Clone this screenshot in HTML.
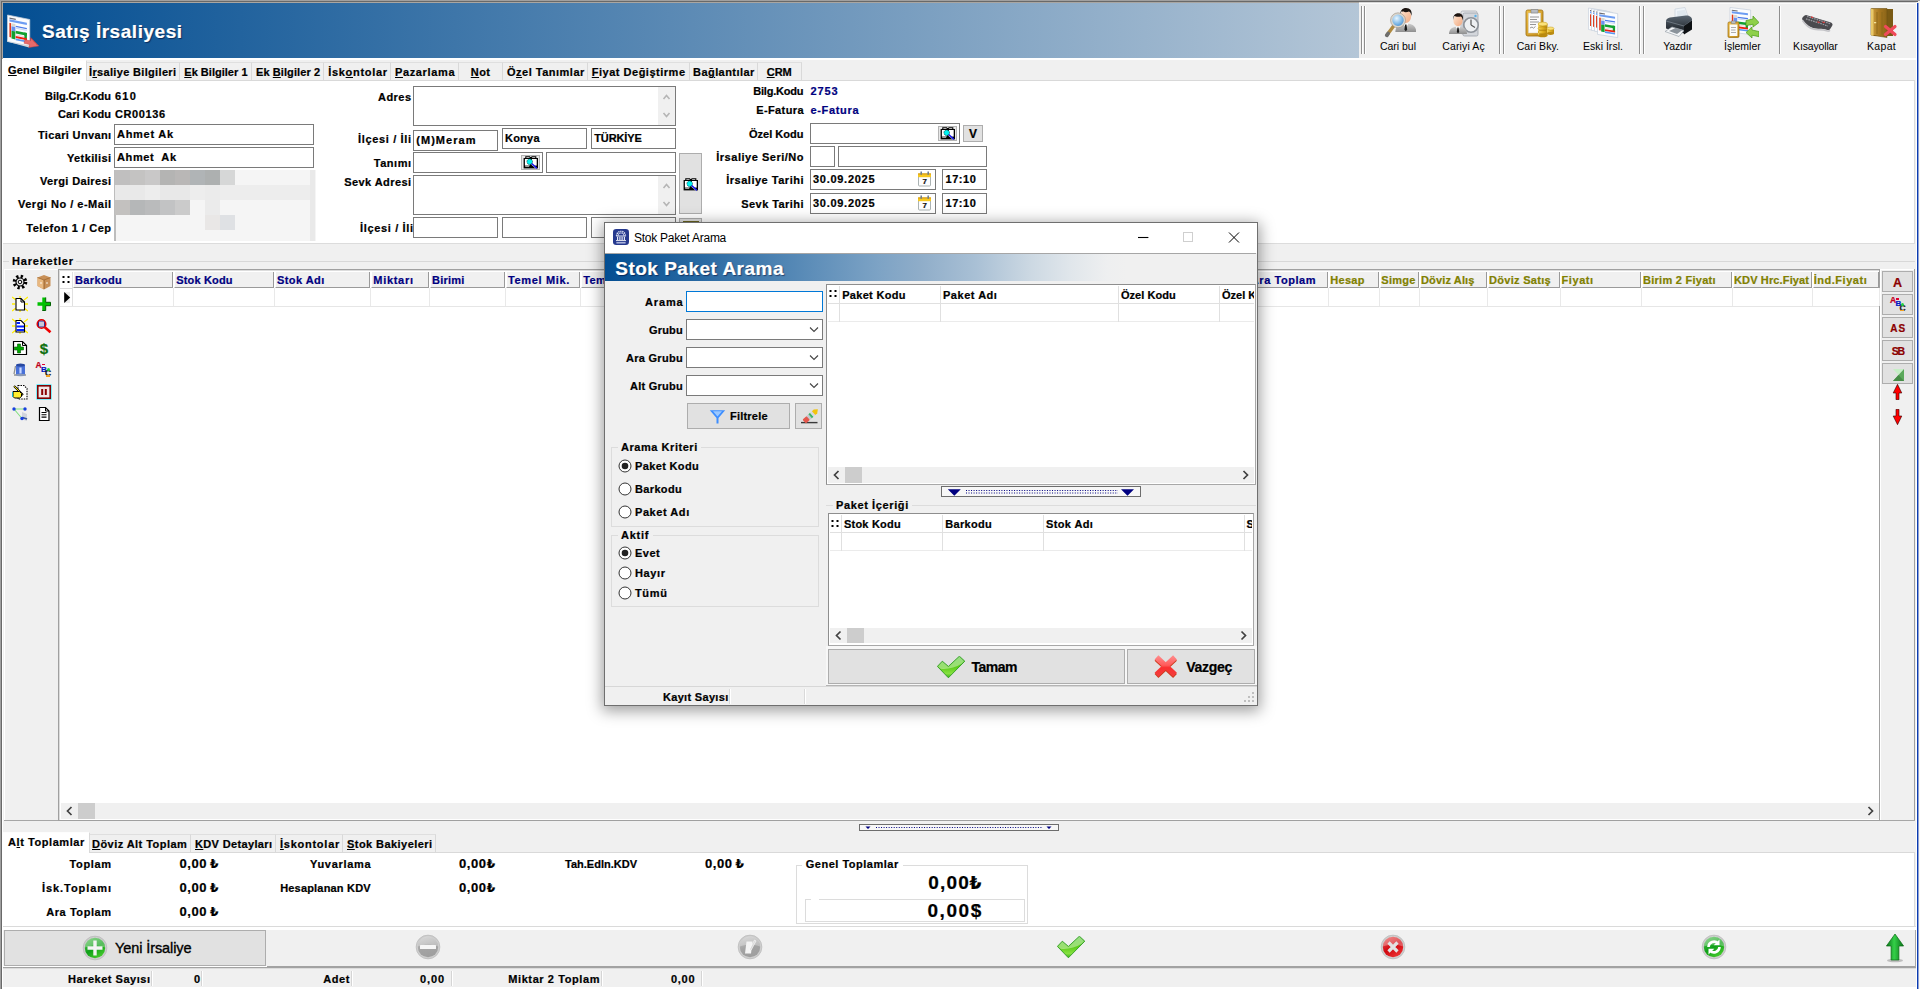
<!DOCTYPE html>
<html lang="tr"><head><meta charset="utf-8"><title>Satış İrsaliyesi</title>
<style>
html,body{margin:0;padding:0;}
body{width:1920px;height:989px;overflow:hidden;background:#f0f0f0;position:relative;font-family:"Liberation Sans",sans-serif;font-weight:700;}
div,svg,span.t{position:absolute;}
span.t{white-space:pre;-webkit-text-stroke:0.22px currentColor;}
u{text-decoration:underline;text-underline-offset:1px;text-decoration-thickness:1px;}
</style></head><body>
<div style="left:0px;top:0px;width:1920px;height:989px;background:#f0f0f0;"></div>
<div style="left:3px;top:3px;width:1356px;height:55px;background:linear-gradient(90deg,#034e92 0%,#b4c6d7 100%);"></div>
<div style="left:1359px;top:3px;width:557px;height:55px;background:#f0f0f0;"></div>
<div style="left:1359px;top:3px;width:557px;height:1px;background:#fbfbfb;"></div>
<div style="left:3px;top:58px;width:1913px;height:2px;background:#ffffff;"></div>
<span class="t" style="left:42.00px;top:18.00px;font-size:19px;line-height:27px;color:#fff;letter-spacing:0.532px;text-shadow:1px 1px 1px rgba(0,0,40,.55);">Satış İrsaliyesi</span>
<div style="left:1361px;top:6px;width:1px;height:48px;background:#8e8e8e;"></div>
<div style="left:1362px;top:6px;width:1px;height:48px;background:#ffffff;"></div>
<div style="left:1364px;top:6px;width:1px;height:48px;background:#8e8e8e;"></div>
<div style="left:1365px;top:6px;width:1px;height:48px;background:#ffffff;"></div>
<div style="left:1499px;top:6px;width:1px;height:48px;background:#8e8e8e;"></div>
<div style="left:1500px;top:6px;width:1px;height:48px;background:#ffffff;"></div>
<div style="left:1503px;top:6px;width:1px;height:48px;background:#8e8e8e;"></div>
<div style="left:1504px;top:6px;width:1px;height:48px;background:#ffffff;"></div>
<div style="left:1639px;top:6px;width:1px;height:48px;background:#8e8e8e;"></div>
<div style="left:1640px;top:6px;width:1px;height:48px;background:#ffffff;"></div>
<div style="left:1643px;top:6px;width:1px;height:48px;background:#8e8e8e;"></div>
<div style="left:1644px;top:6px;width:1px;height:48px;background:#ffffff;"></div>
<div style="left:1779px;top:6px;width:1px;height:48px;background:#8e8e8e;"></div>
<div style="left:1780px;top:6px;width:1px;height:48px;background:#ffffff;"></div>
<span class="t" style="left:1380.00px;top:39.00px;font-size:10.5px;line-height:15px;color:#000;font-weight:400;-webkit-text-stroke:0;letter-spacing:-0.026px;">Cari bul</span>
<span class="t" style="left:1442.35px;top:39.00px;font-size:10.5px;line-height:15px;color:#000;font-weight:400;-webkit-text-stroke:0;letter-spacing:0.109px;">Cariyi Aç</span>
<span class="t" style="left:1516.65px;top:39.00px;font-size:10.5px;line-height:15px;color:#000;font-weight:400;-webkit-text-stroke:0;letter-spacing:0.061px;">Cari Bky.</span>
<span class="t" style="left:1583.05px;top:39.00px;font-size:10.5px;line-height:15px;color:#000;font-weight:400;-webkit-text-stroke:0;letter-spacing:0.026px;">Eski İrsl.</span>
<span class="t" style="left:1663.25px;top:39.00px;font-size:10.5px;line-height:15px;color:#000;font-weight:400;-webkit-text-stroke:0;letter-spacing:-0.173px;">Yazdır</span>
<span class="t" style="left:1724.10px;top:39.00px;font-size:10.5px;line-height:15px;color:#000;font-weight:400;-webkit-text-stroke:0;letter-spacing:-0.022px;">İşlemler</span>
<span class="t" style="left:1793.05px;top:39.00px;font-size:10.5px;line-height:15px;color:#000;font-weight:400;-webkit-text-stroke:0;letter-spacing:-0.156px;">Kısayollar</span>
<span class="t" style="left:1867.05px;top:39.00px;font-size:10.5px;line-height:15px;color:#000;font-weight:400;-webkit-text-stroke:0;letter-spacing:0.316px;">Kapat</span>
<div style="left:3px;top:80px;width:1912px;height:1px;background:#d9d9d9;"></div>
<div style="left:3px;top:60px;width:84px;height:22px;background:#fff;border-right:1px solid #d9d9d9;border-top:1px solid #fdfdfd;box-sizing:border-box;"></div>
<span class="t" style="left:8.00px;top:63.00px;font-size:11px;line-height:15px;color:#000;letter-spacing:0.200px;"><u>G</u>enel Bilgiler</span>
<div style="left:87px;top:62px;width:93px;height:18px;background:#f0f0f0;border-top:1px solid #dfdfdf;border-right:1px solid #d9d9d9;box-sizing:border-box;"></div>
<span class="t" style="left:89.00px;top:65.00px;font-size:11px;line-height:15px;color:#000;letter-spacing:0.334px;">İ<u>r</u>saliye Bilgileri</span>
<div style="left:180px;top:62px;width:72px;height:18px;background:#f0f0f0;border-top:1px solid #dfdfdf;border-right:1px solid #d9d9d9;box-sizing:border-box;"></div>
<span class="t" style="left:184.25px;top:65.00px;font-size:11px;line-height:15px;color:#000;letter-spacing:0.023px;"><u>E</u>k Bilgiler 1</span>
<div style="left:252px;top:62px;width:72px;height:18px;background:#f0f0f0;border-top:1px solid #dfdfdf;border-right:1px solid #d9d9d9;box-sizing:border-box;"></div>
<span class="t" style="left:256.00px;top:65.00px;font-size:11px;line-height:15px;color:#000;letter-spacing:0.086px;">Ek <u>B</u>ilgiler 2</span>
<div style="left:324px;top:62px;width:67px;height:18px;background:#f0f0f0;border-top:1px solid #dfdfdf;border-right:1px solid #d9d9d9;box-sizing:border-box;"></div>
<span class="t" style="left:328.25px;top:65.00px;font-size:11px;line-height:15px;color:#000;letter-spacing:0.687px;">İsk<u>o</u>ntolar</span>
<div style="left:391px;top:62px;width:68px;height:18px;background:#f0f0f0;border-top:1px solid #dfdfdf;border-right:1px solid #d9d9d9;box-sizing:border-box;"></div>
<span class="t" style="left:395.00px;top:65.00px;font-size:11px;line-height:15px;color:#000;letter-spacing:0.634px;"><u>P</u>azarlama</span>
<div style="left:459px;top:62px;width:44px;height:18px;background:#f0f0f0;border-top:1px solid #dfdfdf;border-right:1px solid #d9d9d9;box-sizing:border-box;"></div>
<span class="t" style="left:470.75px;top:65.00px;font-size:11px;line-height:15px;color:#000;letter-spacing:0.462px;"><u>N</u>ot</span>
<div style="left:503px;top:62px;width:85px;height:18px;background:#f0f0f0;border-top:1px solid #dfdfdf;border-right:1px solid #d9d9d9;box-sizing:border-box;"></div>
<span class="t" style="left:507.00px;top:65.00px;font-size:11px;line-height:15px;color:#000;letter-spacing:0.495px;">Ö<u>z</u>el Tanımlar</span>
<div style="left:588px;top:62px;width:102px;height:18px;background:#f0f0f0;border-top:1px solid #dfdfdf;border-right:1px solid #d9d9d9;box-sizing:border-box;"></div>
<span class="t" style="left:591.75px;top:65.00px;font-size:11px;line-height:15px;color:#000;letter-spacing:0.511px;"><u>F</u>iyat Değiştirme</span>
<div style="left:690px;top:62px;width:68px;height:18px;background:#f0f0f0;border-top:1px solid #dfdfdf;border-right:1px solid #d9d9d9;box-sizing:border-box;"></div>
<span class="t" style="left:693.00px;top:65.00px;font-size:11px;line-height:15px;color:#000;letter-spacing:0.441px;">Ba<u>ğ</u>lantılar</span>
<div style="left:758px;top:62px;width:44px;height:18px;background:#f0f0f0;border-top:1px solid #dfdfdf;border-right:1px solid #d9d9d9;box-sizing:border-box;"></div>
<span class="t" style="left:766.75px;top:65.00px;font-size:11px;line-height:15px;color:#000;letter-spacing:-0.025px;"><u>C</u>RM</span>
<div style="left:3px;top:81px;width:1912px;height:163px;background:#fff;border-bottom:1px solid #dcdcdc;border-right:1px solid #dcdcdc;box-sizing:border-box;"></div>
<span class="t" style="left:45.00px;top:89.00px;font-size:11px;line-height:15px;color:#000;letter-spacing:-0.055px;">Bilg.Cr.Kodu</span>
<span class="t" style="left:115.00px;top:89.00px;font-size:11px;line-height:15px;color:#000;letter-spacing:1.199px;">610</span>
<span class="t" style="left:58.00px;top:107.00px;font-size:11px;line-height:15px;color:#000;letter-spacing:0.056px;">Cari Kodu</span>
<span class="t" style="left:115.00px;top:107.00px;font-size:11px;line-height:15px;color:#000;letter-spacing:0.588px;">CR00136</span>
<span class="t" style="left:38.00px;top:128.00px;font-size:11px;line-height:15px;color:#000;letter-spacing:0.344px;">Ticari Unvanı</span>
<div style="left:114px;top:124px;width:200px;height:21px;background:#fff;border:1px solid #7a7a7a;box-sizing:border-box;"></div>
<span class="t" style="left:117.00px;top:127.00px;font-size:11px;line-height:15px;color:#000;letter-spacing:0.724px;">Ahmet Ak</span>
<span class="t" style="left:67.00px;top:151.00px;font-size:11px;line-height:15px;color:#000;letter-spacing:0.379px;">Yetkilisi</span>
<div style="left:114px;top:147px;width:200px;height:21px;background:#fff;border:1px solid #7a7a7a;box-sizing:border-box;"></div>
<span class="t" style="left:117.00px;top:150.00px;font-size:11px;line-height:15px;color:#000;letter-spacing:0.626px;">Ahmet  Ak</span>
<span class="t" style="left:40.00px;top:174.00px;font-size:11px;line-height:15px;color:#000;letter-spacing:0.363px;">Vergi Dairesi</span>
<span class="t" style="left:18.00px;top:197.00px;font-size:11px;line-height:15px;color:#000;letter-spacing:0.502px;">Vergi No / e-Mail</span>
<span class="t" style="left:26.25px;top:221.00px;font-size:11px;line-height:15px;color:#000;letter-spacing:0.524px;">Telefon 1 / Cep</span>
<div style="left:114px;top:170px;width:202px;height:71px;background:#f5f5f5;"></div>
<div style="left:114px;top:170px;width:2px;height:71px;background:#bdbdbd;"></div>
<div style="left:115px;top:170px;width:15px;height:15px;background:#c0bfbf;"></div>
<div style="left:130px;top:170px;width:15px;height:15px;background:#c4c3c2;"></div>
<div style="left:145px;top:170px;width:15px;height:15px;background:#c9c8c8;"></div>
<div style="left:160px;top:170px;width:15px;height:15px;background:#b4b4b3;"></div>
<div style="left:175px;top:170px;width:15px;height:15px;background:#b9b7b6;"></div>
<div style="left:190px;top:170px;width:15px;height:15px;background:#b0b4b6;"></div>
<div style="left:205px;top:170px;width:15px;height:15px;background:#adb0b0;"></div>
<div style="left:220px;top:170px;width:15px;height:15px;background:#d6d7d7;"></div>
<div style="left:115px;top:185px;width:200px;height:15px;background:#ededed;"></div>
<div style="left:115px;top:185px;width:30px;height:15px;background:#e9e9e9;"></div>
<div style="left:160px;top:185px;width:30px;height:15px;background:#e8e8e8;"></div>
<div style="left:115px;top:200px;width:15px;height:15px;background:#c3c1bf;"></div>
<div style="left:130px;top:200px;width:15px;height:15px;background:#b5b7b8;"></div>
<div style="left:145px;top:200px;width:15px;height:15px;background:#babbbc;"></div>
<div style="left:160px;top:200px;width:15px;height:15px;background:#c2c3c4;"></div>
<div style="left:175px;top:200px;width:15px;height:15px;background:#cbcbcb;"></div>
<div style="left:205px;top:185px;width:15px;height:45px;background:#ebebeb;"></div>
<div style="left:205px;top:215px;width:15px;height:15px;background:#e9e7e6;"></div>
<div style="left:220px;top:215px;width:15px;height:15px;background:#dfe1e4;"></div>
<div style="left:310px;top:170px;width:5px;height:71px;background:#e9e9e9;"></div>
<span class="t" style="left:378.00px;top:90.00px;font-size:11px;line-height:15px;color:#000;letter-spacing:0.455px;">Adres</span>
<span class="t" style="left:358.00px;top:132.00px;font-size:11px;line-height:15px;color:#000;letter-spacing:0.650px;">İlçesi / İli</span>
<span class="t" style="left:373.75px;top:156.00px;font-size:11px;line-height:15px;color:#000;letter-spacing:0.524px;">Tanımı</span>
<span class="t" style="left:344.25px;top:175.00px;font-size:11px;line-height:15px;color:#000;letter-spacing:0.418px;">Sevk Adresi</span>
<span class="t" style="left:360.00px;top:221.00px;font-size:11px;line-height:15px;color:#000;letter-spacing:0.650px;">İlçesi / İli</span>
<div style="left:413px;top:86px;width:263px;height:40px;background:#fff;border:1px solid #7a7a7a;box-sizing:border-box;"></div>
<div style="left:658px;top:87px;width:17px;height:38px;background:#f0f0f0;"></div>
<svg style="left:658px;top:87px;" width="17" height="38" viewBox="0 0 17 38"><path d="M5.5 12l3-3.5l3 3.5" fill="none" stroke="#b5b5b5" stroke-width="1.6"/><path d="M5.5 26l3 3.5l3-3.5" fill="none" stroke="#b5b5b5" stroke-width="1.6"/></svg>
<div style="left:413px;top:130px;width:85px;height:21px;background:#fff;border:1px solid #7a7a7a;box-sizing:border-box;"></div>
<span class="t" style="left:416.25px;top:133.00px;font-size:11px;line-height:15px;color:#000;letter-spacing:1.043px;">(M)Meram</span>
<div style="left:502px;top:128px;width:85px;height:21px;background:#fff;border:1px solid #7a7a7a;box-sizing:border-box;"></div>
<span class="t" style="left:505.00px;top:131.00px;font-size:11px;line-height:15px;color:#000;letter-spacing:0.221px;">Konya</span>
<div style="left:591px;top:128px;width:85px;height:21px;background:#fff;border:1px solid #7a7a7a;box-sizing:border-box;"></div>
<span class="t" style="left:594.25px;top:131.00px;font-size:11px;line-height:15px;color:#000;letter-spacing:-0.130px;">TÜRKİYE</span>
<div style="left:413px;top:152px;width:130px;height:21px;background:#fff;border:1px solid #7a7a7a;box-sizing:border-box;"></div>
<div style="left:546px;top:152px;width:130px;height:21px;background:#fff;border:1px solid #7a7a7a;box-sizing:border-box;"></div>
<div style="left:413px;top:175px;width:263px;height:40px;background:#fff;border:1px solid #7a7a7a;box-sizing:border-box;"></div>
<div style="left:658px;top:176px;width:17px;height:38px;background:#f0f0f0;"></div>
<svg style="left:658px;top:176px;" width="17" height="38" viewBox="0 0 17 38"><path d="M5.5 12l3-3.5l3 3.5" fill="none" stroke="#b5b5b5" stroke-width="1.6"/><path d="M5.5 26l3 3.5l3-3.5" fill="none" stroke="#b5b5b5" stroke-width="1.6"/></svg>
<div style="left:413px;top:217px;width:85px;height:21px;background:#fff;border:1px solid #7a7a7a;box-sizing:border-box;"></div>
<div style="left:502px;top:217px;width:85px;height:21px;background:#fff;border:1px solid #7a7a7a;box-sizing:border-box;"></div>
<div style="left:591px;top:217px;width:85px;height:21px;background:#fff;border:1px solid #7a7a7a;box-sizing:border-box;"></div>
<div style="left:679px;top:153px;width:23px;height:61px;background:#e1e1e1;border:1px solid #adadad;box-sizing:border-box;"></div>
<div style="left:679px;top:218px;width:23px;height:24px;background:#e1e1e1;border:1px solid #adadad;box-sizing:border-box;"></div>
<div style="left:683px;top:221px;width:16px;height:1px;background:#6a6420;"></div>
<span class="t" style="left:753.25px;top:84.00px;font-size:11px;line-height:15px;color:#000;letter-spacing:-0.210px;">Bilg.Kodu</span>
<span class="t" style="left:810.50px;top:84.00px;font-size:11px;line-height:15px;color:#000080;letter-spacing:0.844px;">2753</span>
<span class="t" style="left:756.25px;top:103.00px;font-size:11px;line-height:15px;color:#000;letter-spacing:0.376px;">E-Fatura</span>
<span class="t" style="left:810.50px;top:103.00px;font-size:11px;line-height:15px;color:#000080;letter-spacing:0.658px;">e-Fatura</span>
<span class="t" style="left:749.00px;top:127.00px;font-size:11px;line-height:15px;color:#000;letter-spacing:0.014px;">Özel Kodu</span>
<div style="left:810px;top:123px;width:150px;height:21px;background:#fff;border:1px solid #7a7a7a;box-sizing:border-box;"></div>
<div style="left:963px;top:125px;width:20px;height:17px;background:#e1e1e1;border:1px solid #adadad;box-sizing:border-box;"></div>
<span class="t" style="left:969.00px;top:126.00px;font-size:12px;line-height:17px;color:#000;">V</span>
<span class="t" style="left:716.25px;top:150.00px;font-size:11px;line-height:15px;color:#000;letter-spacing:0.518px;">İrsaliye Seri/No</span>
<div style="left:810px;top:146px;width:25px;height:21px;background:#fff;border:1px solid #7a7a7a;box-sizing:border-box;"></div>
<div style="left:838px;top:146px;width:149px;height:21px;background:#fff;border:1px solid #7a7a7a;box-sizing:border-box;"></div>
<span class="t" style="left:726.25px;top:173.00px;font-size:11px;line-height:15px;color:#000;letter-spacing:0.510px;">İrsaliye Tarihi</span>
<div style="left:810px;top:169px;width:126px;height:21px;background:#fff;border:1px solid #7a7a7a;box-sizing:border-box;"></div>
<div style="left:942px;top:169px;width:45px;height:21px;background:#fff;border:1px solid #7a7a7a;box-sizing:border-box;"></div>
<span class="t" style="left:813.00px;top:172.00px;font-size:11px;line-height:15px;color:#000;letter-spacing:0.717px;">30.09.2025</span>
<span class="t" style="left:945.50px;top:172.00px;font-size:11px;line-height:15px;color:#000;letter-spacing:0.530px;">17:10</span>
<span class="t" style="left:741.25px;top:197.00px;font-size:11px;line-height:15px;color:#000;letter-spacing:0.437px;">Sevk Tarihi</span>
<div style="left:810px;top:193px;width:126px;height:21px;background:#fff;border:1px solid #7a7a7a;box-sizing:border-box;"></div>
<div style="left:942px;top:193px;width:45px;height:21px;background:#fff;border:1px solid #7a7a7a;box-sizing:border-box;"></div>
<span class="t" style="left:813.00px;top:196.00px;font-size:11px;line-height:15px;color:#000;letter-spacing:0.717px;">30.09.2025</span>
<span class="t" style="left:945.50px;top:196.00px;font-size:11px;line-height:15px;color:#000;letter-spacing:0.530px;">17:10</span>
<div style="left:3px;top:261px;width:1912px;height:1px;background:#d8d8d8;"></div>
<div style="left:4px;top:269px;width:1px;height:551px;background:#fff;"></div>
<div style="left:4px;top:269px;width:54px;height:1px;background:#fff;"></div>
<div style="left:1914px;top:269px;width:1px;height:552px;background:#a0a0a0;"></div>
<div style="left:1880px;top:269px;width:34px;height:1px;background:#fff;"></div>
<div style="left:1880px;top:269px;width:1px;height:551px;background:#fff;"></div>
<div style="left:9px;top:255px;width:67px;height:14px;background:#f0f0f0;"></div>
<span class="t" style="left:12.00px;top:254.00px;font-size:11px;line-height:15px;color:#000;letter-spacing:0.799px;">Hareketler</span>
<div style="left:4px;top:820px;width:1911px;height:1px;background:#a6a6a6;"></div>
<div style="left:58px;top:269px;width:1822px;height:552px;background:#fff;border:1px solid #a0a0a0;box-sizing:border-box;box-shadow:inset 1px 1px 0 #dcdcdc;"></div>
<div style="left:60px;top:272px;width:1819px;height:16px;background:#fff;"></div>
<div style="left:60px;top:272px;width:11px;height:16px;background:#fff;"></div>
<div style="left:73px;top:272px;width:100px;height:16px;background:#f0f0f0;border-right:1px solid #9a9a9a;border-bottom:1px solid #9a9a9a;border-left:1px solid #fff;box-sizing:border-box;"></div>
<span class="t" style="left:75.00px;top:273.00px;font-size:11px;line-height:15px;color:#000080;letter-spacing:0.356px;">Barkodu</span>
<div style="left:173px;top:288px;width:1px;height:18px;background:#e9e9e9;"></div>
<div style="left:174px;top:272px;width:100px;height:16px;background:#f0f0f0;border-right:1px solid #9a9a9a;border-bottom:1px solid #9a9a9a;border-left:1px solid #fff;box-sizing:border-box;"></div>
<span class="t" style="left:176.25px;top:273.00px;font-size:11px;line-height:15px;color:#000080;letter-spacing:0.157px;">Stok Kodu</span>
<div style="left:274px;top:288px;width:1px;height:18px;background:#e9e9e9;"></div>
<div style="left:275px;top:272px;width:95px;height:16px;background:#f0f0f0;border-right:1px solid #9a9a9a;border-bottom:1px solid #9a9a9a;border-left:1px solid #fff;box-sizing:border-box;"></div>
<span class="t" style="left:277.00px;top:273.00px;font-size:11px;line-height:15px;color:#000080;letter-spacing:0.435px;">Stok Adı</span>
<div style="left:370px;top:288px;width:1px;height:18px;background:#e9e9e9;"></div>
<div style="left:371px;top:272px;width:58px;height:16px;background:#f0f0f0;border-right:1px solid #9a9a9a;border-bottom:1px solid #9a9a9a;border-left:1px solid #fff;box-sizing:border-box;"></div>
<span class="t" style="left:373.25px;top:273.00px;font-size:11px;line-height:15px;color:#000080;letter-spacing:0.716px;">Miktarı</span>
<div style="left:429px;top:288px;width:1px;height:18px;background:#e9e9e9;"></div>
<div style="left:430px;top:272px;width:75px;height:16px;background:#f0f0f0;border-right:1px solid #9a9a9a;border-bottom:1px solid #9a9a9a;border-left:1px solid #fff;box-sizing:border-box;"></div>
<span class="t" style="left:432.00px;top:273.00px;font-size:11px;line-height:15px;color:#000080;letter-spacing:0.215px;">Birimi</span>
<div style="left:505px;top:288px;width:1px;height:18px;background:#e9e9e9;"></div>
<div style="left:506px;top:272px;width:74px;height:16px;background:#f0f0f0;border-right:1px solid #9a9a9a;border-bottom:1px solid #9a9a9a;border-left:1px solid #fff;box-sizing:border-box;"></div>
<span class="t" style="left:508.00px;top:273.00px;font-size:11px;line-height:15px;color:#000080;letter-spacing:0.648px;">Temel Mik.</span>
<div style="left:580px;top:288px;width:1px;height:18px;background:#e9e9e9;"></div>
<div style="left:581px;top:272px;width:120px;height:16px;background:#f0f0f0;border-right:1px solid #9a9a9a;border-bottom:1px solid #9a9a9a;border-left:1px solid #fff;box-sizing:border-box;"></div>
<span class="t" style="left:583.25px;top:273.00px;font-size:11px;line-height:15px;color:#000080;letter-spacing:0.385px;">Temel Birim</span>
<div style="left:701px;top:288px;width:1px;height:18px;background:#e9e9e9;"></div>
<div style="left:1240px;top:272px;width:88px;height:16px;background:#f0f0f0;border-right:1px solid #9a9a9a;border-bottom:1px solid #9a9a9a;border-left:1px solid #fff;box-sizing:border-box;"></div>
<span class="t" style="left:1250.80px;top:273.00px;font-size:11px;line-height:15px;color:#000080;letter-spacing:0.562px;">Ara Toplam</span>
<div style="left:1328px;top:288px;width:1px;height:18px;background:#e9e9e9;"></div>
<div style="left:1329px;top:272px;width:50px;height:16px;background:#f0f0f0;border-right:1px solid #9a9a9a;border-bottom:1px solid #9a9a9a;border-left:1px solid #fff;box-sizing:border-box;"></div>
<span class="t" style="left:1330.25px;top:273.00px;font-size:11px;line-height:15px;color:#808000;letter-spacing:0.297px;">Hesap</span>
<div style="left:1379px;top:288px;width:1px;height:18px;background:#e9e9e9;"></div>
<div style="left:1380px;top:272px;width:39px;height:16px;background:#f0f0f0;border-right:1px solid #9a9a9a;border-bottom:1px solid #9a9a9a;border-left:1px solid #fff;box-sizing:border-box;"></div>
<span class="t" style="left:1381.25px;top:273.00px;font-size:11px;line-height:15px;color:#808000;letter-spacing:0.297px;">Simge</span>
<div style="left:1419px;top:288px;width:1px;height:18px;background:#e9e9e9;"></div>
<div style="left:1420px;top:272px;width:67px;height:16px;background:#f0f0f0;border-right:1px solid #9a9a9a;border-bottom:1px solid #9a9a9a;border-left:1px solid #fff;box-sizing:border-box;"></div>
<span class="t" style="left:1421.00px;top:273.00px;font-size:11px;line-height:15px;color:#808000;letter-spacing:0.138px;">Döviz Alış</span>
<div style="left:1487px;top:288px;width:1px;height:18px;background:#e9e9e9;"></div>
<div style="left:1488px;top:272px;width:72px;height:16px;background:#f0f0f0;border-right:1px solid #9a9a9a;border-bottom:1px solid #9a9a9a;border-left:1px solid #fff;box-sizing:border-box;"></div>
<span class="t" style="left:1489.00px;top:273.00px;font-size:11px;line-height:15px;color:#808000;letter-spacing:0.292px;">Döviz Satış</span>
<div style="left:1560px;top:288px;width:1px;height:18px;background:#e9e9e9;"></div>
<div style="left:1561px;top:272px;width:80px;height:16px;background:#f0f0f0;border-right:1px solid #9a9a9a;border-bottom:1px solid #9a9a9a;border-left:1px solid #fff;box-sizing:border-box;"></div>
<span class="t" style="left:1561.60px;top:273.00px;font-size:11px;line-height:15px;color:#808000;letter-spacing:0.555px;">Fiyatı</span>
<div style="left:1641px;top:288px;width:1px;height:18px;background:#e9e9e9;"></div>
<div style="left:1642px;top:272px;width:90px;height:16px;background:#f0f0f0;border-right:1px solid #9a9a9a;border-bottom:1px solid #9a9a9a;border-left:1px solid #fff;box-sizing:border-box;"></div>
<span class="t" style="left:1643.00px;top:273.00px;font-size:11px;line-height:15px;color:#808000;letter-spacing:0.271px;">Birim 2 Fiyatı</span>
<div style="left:1732px;top:288px;width:1px;height:18px;background:#e9e9e9;"></div>
<div style="left:1733px;top:272px;width:79px;height:16px;background:#f0f0f0;border-right:1px solid #9a9a9a;border-bottom:1px solid #9a9a9a;border-left:1px solid #fff;box-sizing:border-box;"></div>
<span class="t" style="left:1734.00px;top:273.00px;font-size:11px;line-height:15px;color:#808000;letter-spacing:0.137px;">KDV Hrc.Fiyat</span>
<div style="left:1812px;top:288px;width:1px;height:18px;background:#e9e9e9;"></div>
<div style="left:1813px;top:272px;width:66px;height:16px;background:#f0f0f0;border-right:1px solid #9a9a9a;border-bottom:1px solid #9a9a9a;border-left:1px solid #fff;box-sizing:border-box;"></div>
<span class="t" style="left:1813.70px;top:273.00px;font-size:11px;line-height:15px;color:#808000;letter-spacing:0.525px;">İnd.Fiyatı</span>
<div style="left:1879px;top:288px;width:1px;height:18px;background:#e9e9e9;"></div>
<div style="left:60px;top:306px;width:1819px;height:1px;background:#e6e6e6;"></div>
<div style="left:60px;top:288px;width:12px;height:1px;background:#dcdcdc;"></div>
<div style="left:72px;top:272px;width:1px;height:34px;background:#e0e0e0;"></div>
<svg style="left:62px;top:275px;" width="8" height="10" viewBox="0 0 8 10"><rect x="0.5" y="1" width="2" height="2"/><rect x="5.5" y="1" width="2" height="2"/><rect x="0.5" y="6" width="2" height="2"/><rect x="5.5" y="6" width="2" height="2"/></svg>
<div style="left:64px;top:292px;width:6px;height:11px;background:#ececec;"></div>
<svg style="left:63px;top:291px;" width="9" height="13" viewBox="0 0 9 13"><path d="M1.2 1v11l6-5.5z" fill="#000"/></svg>
<div style="left:61px;top:803px;width:1818px;height:16px;background:#f0f0f0;"></div>
<svg style="left:61px;top:803px;" width="17" height="16" viewBox="0 0 17 16"><path d="M10.5 4.0l-4 4l4 4" fill="none" stroke="#404040" stroke-width="1.7"/></svg>
<svg style="left:1862px;top:803px;" width="17" height="16" viewBox="0 0 17 16"><path d="M6.5 4.0l4 4l-4 4" fill="none" stroke="#404040" stroke-width="1.7"/></svg>
<div style="left:78px;top:803px;width:17px;height:16px;background:#cdcdcd;"></div>
<div style="left:1882px;top:271px;width:31px;height:21px;background:#e1e1e1;border:1px solid #adadad;box-sizing:border-box;"></div>
<div style="left:1882px;top:294px;width:31px;height:21px;background:#e1e1e1;border:1px solid #adadad;box-sizing:border-box;"></div>
<div style="left:1882px;top:317px;width:31px;height:21px;background:#e1e1e1;border:1px solid #adadad;box-sizing:border-box;"></div>
<div style="left:1882px;top:340px;width:31px;height:21px;background:#e1e1e1;border:1px solid #adadad;box-sizing:border-box;"></div>
<div style="left:1882px;top:363px;width:31px;height:21px;background:#e1e1e1;border:1px solid #adadad;box-sizing:border-box;"></div>
<span class="t" style="left:1892.90px;top:274.00px;font-size:12.5px;line-height:18px;color:#8b0000;letter-spacing:0.173px;">A</span>
<span class="t" style="left:1890.25px;top:322.00px;font-size:10px;line-height:14px;color:#8b0000;letter-spacing:1.008px;">AS</span>
<span class="t" style="left:1891.80px;top:344.00px;font-size:10.5px;line-height:15px;color:#8b0000;letter-spacing:-1.187px;">SB</span>
<div style="left:859px;top:824px;width:200px;height:7px;background:#f7f7f7;border:1px solid #6d6d6d;box-sizing:border-box;"></div>
<svg style="left:859px;top:824px;" width="200" height="7" viewBox="0 0 200 7"><path d="M6.500 2.500h5l-2.500 2.600z M187.500 2.500h5l-2.500 2.600z" fill="#000080"/><path d="M17 3.500h167" stroke="#000080" stroke-width="1" stroke-dasharray="1 1.530"/></svg>
<div style="left:3px;top:852px;width:1912px;height:1px;background:#d9d9d9;"></div>
<div style="left:3px;top:832px;width:87px;height:22px;background:#fff;border-right:1px solid #d9d9d9;border-top:1px solid #fdfdfd;box-sizing:border-box;"></div>
<span class="t" style="left:8.00px;top:835.00px;font-size:11px;line-height:15px;color:#000;letter-spacing:0.565px;">A<u>l</u>t Toplamlar</span>
<div style="left:90px;top:834px;width:101px;height:18px;background:#f0f0f0;border-top:1px solid #dfdfdf;border-right:1px solid #d9d9d9;box-sizing:border-box;"></div>
<span class="t" style="left:92.00px;top:837.00px;font-size:11px;line-height:15px;color:#000;letter-spacing:0.450px;"><u>D</u>öviz Alt Toplam</span>
<div style="left:191px;top:834px;width:85px;height:18px;background:#f0f0f0;border-top:1px solid #dfdfdf;border-right:1px solid #d9d9d9;box-sizing:border-box;"></div>
<span class="t" style="left:195.00px;top:837.00px;font-size:11px;line-height:15px;color:#000;letter-spacing:0.354px;"><u>K</u>DV Detayları</span>
<div style="left:276px;top:834px;width:67px;height:18px;background:#f0f0f0;border-top:1px solid #dfdfdf;border-right:1px solid #d9d9d9;box-sizing:border-box;"></div>
<span class="t" style="left:280.00px;top:837.00px;font-size:11px;line-height:15px;color:#000;letter-spacing:0.743px;"><u>İ</u>skontolar</span>
<div style="left:343px;top:834px;width:93px;height:18px;background:#f0f0f0;border-top:1px solid #dfdfdf;border-right:1px solid #d9d9d9;box-sizing:border-box;"></div>
<span class="t" style="left:347.00px;top:837.00px;font-size:11px;line-height:15px;color:#000;letter-spacing:0.438px;"><u>S</u>tok Bakiyeleri</span>
<div style="left:3px;top:853px;width:1912px;height:73px;background:#fff;border-right:1px solid #dcdcdc;box-sizing:border-box;"></div>
<span class="t" style="left:69.50px;top:857.00px;font-size:11px;line-height:15px;color:#000;letter-spacing:0.641px;">Toplam</span>
<span class="t" style="left:179.40px;top:855.00px;font-size:13px;line-height:18px;color:#000;letter-spacing:0.600px;">0,00</span>
<span class="t" style="left:209.90px;top:856px;font-size:12px;line-height:17px;font-family:'DejaVu Sans',sans-serif;">₺</span>
<span class="t" style="left:42.00px;top:881.00px;font-size:11px;line-height:15px;color:#000;letter-spacing:0.930px;">İsk.Toplamı</span>
<span class="t" style="left:179.40px;top:879.00px;font-size:13px;line-height:18px;color:#000;letter-spacing:0.600px;">0,00</span>
<span class="t" style="left:209.90px;top:880px;font-size:12px;line-height:17px;font-family:'DejaVu Sans',sans-serif;">₺</span>
<span class="t" style="left:46.25px;top:905.00px;font-size:11px;line-height:15px;color:#000;letter-spacing:0.562px;">Ara Toplam</span>
<span class="t" style="left:179.40px;top:903.00px;font-size:13px;line-height:18px;color:#000;letter-spacing:0.600px;">0,00</span>
<span class="t" style="left:209.90px;top:904px;font-size:12px;line-height:17px;font-family:'DejaVu Sans',sans-serif;">₺</span>
<span class="t" style="left:310.00px;top:857.00px;font-size:11px;line-height:15px;color:#000;letter-spacing:0.695px;">Yuvarlama</span>
<span class="t" style="left:459.00px;top:855.00px;font-size:13px;line-height:18px;color:#000;letter-spacing:0.600px;">0,00</span>
<span class="t" style="left:486.70px;top:856px;font-size:12px;line-height:17px;font-family:'DejaVu Sans',sans-serif;">₺</span>
<span class="t" style="left:280.20px;top:881.00px;font-size:11px;line-height:15px;color:#000;letter-spacing:0.183px;">Hesaplanan KDV</span>
<span class="t" style="left:459.00px;top:879.00px;font-size:13px;line-height:18px;color:#000;letter-spacing:0.600px;">0,00</span>
<span class="t" style="left:486.70px;top:880px;font-size:12px;line-height:17px;font-family:'DejaVu Sans',sans-serif;">₺</span>
<span class="t" style="left:565.00px;top:857.00px;font-size:11px;line-height:15px;color:#000;letter-spacing:0.009px;">Tah.Edln.KDV</span>
<span class="t" style="left:705.00px;top:855.00px;font-size:13px;line-height:18px;color:#000;letter-spacing:0.600px;">0,00</span>
<span class="t" style="left:735.50px;top:856px;font-size:12px;line-height:17px;font-family:'DejaVu Sans',sans-serif;">₺</span>
<div style="left:796px;top:865px;width:232px;height:59px;border:1px solid #dcdcdc;box-sizing:border-box;"></div>
<div style="left:802px;top:858px;width:101px;height:14px;background:#fff;"></div>
<span class="t" style="left:805.75px;top:857.00px;font-size:11px;line-height:15px;color:#000;letter-spacing:0.509px;">Genel Toplamlar</span>
<div style="left:805px;top:899px;width:220px;height:23px;border:1px solid #dcdcdc;box-sizing:border-box;"></div>
<div style="left:811px;top:899px;width:8px;height:1px;background:#fff;"></div>
<span class="t" style="left:928.25px;top:869.00px;font-size:19px;line-height:27px;color:#000;letter-spacing:1.175px;">0,00</span>
<span class="t" style="left:969.50px;top:871px;font-size:17px;line-height:24px;font-family:'DejaVu Sans',sans-serif;">₺</span>
<span class="t" style="left:927.50px;top:897.00px;font-size:19px;line-height:27px;color:#000;letter-spacing:1.552px;">0,00$</span>
<div style="left:3px;top:926px;width:1913px;height:1px;background:#dadada;"></div>
<div style="left:3px;top:927px;width:1913px;height:3px;background:#fff;"></div>
<div style="left:3px;top:930px;width:1913px;height:36px;background:#f0f0f0;"></div>
<div style="left:3px;top:966px;width:1913px;height:2px;background:#a2a2a2;"></div>
<div style="left:3px;top:966px;width:264px;height:1px;background:#fff;"></div>
<div style="left:3px;top:968px;width:1913px;height:1px;background:#dcdcdc;"></div>
<div style="left:1915px;top:930px;width:1px;height:37px;background:#a8a8a8;"></div>
<div style="left:4px;top:930px;width:262px;height:36px;background:#e1e1e1;border:1px solid #adadad;box-sizing:border-box;"></div>
<span class="t" style="left:115.00px;top:938.00px;font-size:14.5px;line-height:20px;color:#000;font-weight:400;-webkit-text-stroke:0;letter-spacing:-0.095px;-webkit-text-stroke:0.35px #000;">Yeni İrsaliye</span>
<div style="left:3px;top:969px;width:1913px;height:18px;background:#f0f0f0;"></div>
<div style="left:0px;top:987px;width:1920px;height:2px;background:#fff;"></div>
<span class="t" style="left:68.00px;top:972.00px;font-size:11px;line-height:15px;color:#000;letter-spacing:0.522px;">Hareket Sayısı</span>
<div style="left:151px;top:971px;width:1px;height:15px;background:#d5d5d5;"></div>
<div style="left:152px;top:971px;width:1px;height:15px;background:#fff;"></div>
<span class="t" style="left:193.88px;top:972.00px;font-size:11px;line-height:15px;color:#000;">0</span>
<div style="left:201px;top:971px;width:1px;height:15px;background:#d5d5d5;"></div>
<div style="left:202px;top:971px;width:1px;height:15px;background:#fff;"></div>
<span class="t" style="left:323.25px;top:972.00px;font-size:11px;line-height:15px;color:#000;letter-spacing:0.603px;">Adet</span>
<div style="left:351px;top:971px;width:1px;height:15px;background:#d5d5d5;"></div>
<div style="left:352px;top:971px;width:1px;height:15px;background:#fff;"></div>
<span class="t" style="left:420.00px;top:972.00px;font-size:11px;line-height:15px;color:#000;letter-spacing:0.864px;">0,00</span>
<div style="left:451px;top:971px;width:1px;height:15px;background:#d5d5d5;"></div>
<div style="left:452px;top:971px;width:1px;height:15px;background:#fff;"></div>
<span class="t" style="left:508.25px;top:972.00px;font-size:11px;line-height:15px;color:#000;letter-spacing:0.595px;">Miktar 2 Toplam</span>
<div style="left:601px;top:971px;width:1px;height:15px;background:#d5d5d5;"></div>
<div style="left:602px;top:971px;width:1px;height:15px;background:#fff;"></div>
<span class="t" style="left:671.00px;top:972.00px;font-size:11px;line-height:15px;color:#000;letter-spacing:0.698px;">0,00</span>
<div style="left:701px;top:971px;width:1px;height:15px;background:#d5d5d5;"></div>
<div style="left:702px;top:971px;width:1px;height:15px;background:#fff;"></div>
<svg width="0" height="0" style="left:0;top:0"><defs>
<linearGradient id="gSkin" x1="0" y1="0" x2="1" y2="1"><stop offset="0" stop-color="#ffe6d2"/><stop offset="1" stop-color="#f0a77e"/></linearGradient>
<linearGradient id="gSuit" x1="0" y1="0" x2="0" y2="1"><stop offset="0" stop-color="#cfcfcf"/><stop offset="1" stop-color="#8f8f8f"/></linearGradient>
<radialGradient id="gGlass" cx=".4" cy=".35" r=".7"><stop offset="0" stop-color="#e8f6ff"/><stop offset=".6" stop-color="#7fb8e6"/><stop offset="1" stop-color="#3f86c8"/></radialGradient>
<linearGradient id="gGold" x1="0" y1="0" x2="1" y2="0"><stop offset="0" stop-color="#f7d860"/><stop offset=".5" stop-color="#e0b020"/><stop offset="1" stop-color="#b98a10"/></linearGradient>
<linearGradient id="gClip" x1="0" y1="0" x2="1" y2="1"><stop offset="0" stop-color="#f0c048"/><stop offset="1" stop-color="#c08a18"/></linearGradient>
<linearGradient id="gDoor" x1="0" y1="0" x2="1" y2="0"><stop offset="0" stop-color="#d0a040"/><stop offset=".5" stop-color="#a87820"/><stop offset="1" stop-color="#8a6418"/></linearGradient>
<linearGradient id="gPrn" x1="0" y1="0" x2="0" y2="1"><stop offset="0" stop-color="#5a6672"/><stop offset="1" stop-color="#15191e"/></linearGradient>
<linearGradient id="gGreenB" x1=".2" y1="0" x2=".8" y2="1"><stop offset="0" stop-color="#52c052"/><stop offset=".5" stop-color="#0fa018"/><stop offset="1" stop-color="#4ed030"/></linearGradient>
<linearGradient id="gRedB" x1=".2" y1="0" x2=".8" y2="1"><stop offset="0" stop-color="#e85050"/><stop offset=".5" stop-color="#d00810"/><stop offset="1" stop-color="#f03838"/></linearGradient>
<linearGradient id="gGrayB" x1=".3" y1="0" x2=".6" y2="1"><stop offset="0" stop-color="#c4c4c4"/><stop offset=".5" stop-color="#a4a4a4"/><stop offset="1" stop-color="#9e9e9e"/></linearGradient>
<linearGradient id="gChk" x1="0" y1="0" x2="0" y2="1"><stop offset="0" stop-color="#58c838"/><stop offset=".5" stop-color="#5ccc18"/><stop offset=".8" stop-color="#86e040"/><stop offset="1" stop-color="#38b018"/></linearGradient>
<linearGradient id="gX" x1="0" y1="0" x2="0" y2="1"><stop offset="0" stop-color="#ff9c9c"/><stop offset=".5" stop-color="#f04040"/><stop offset="1" stop-color="#d01818"/></linearGradient>
<linearGradient id="gX2" gradientUnits="userSpaceOnUse" x1="0" y1="3" x2="0" y2="26"><stop offset="0" stop-color="#ff9090"/><stop offset=".45" stop-color="#ff5a5a"/><stop offset=".55" stop-color="#fa3030"/><stop offset="1" stop-color="#f04040"/></linearGradient>
<linearGradient id="gArr" x1="0" y1="0" x2="1" y2="0"><stop offset="0" stop-color="#087018"/><stop offset=".45" stop-color="#34d048"/><stop offset="1" stop-color="#087018"/></linearGradient>
</defs></svg>
<svg style="left:6px;top:13px;" width="34" height="35" viewBox="0 0 34 35"><path d="M1 26.500l22 5.500v2.500l-22-6z" fill="#d6d6d6"/><g transform="translate(1.5,2) scale(1.06) skewY(11.5)">
<rect x="0" y="0" width="21" height="25" fill="#fbfcfe" stroke="#c4ceda" stroke-width=".7"/>
<rect x="1.800" y="2" width="6" height="1.100" fill="#6a6a70"/>
<rect x="1.800" y="3.600" width="16.500" height="2.100" fill="#6c9cf2"/>
<rect x="1.800" y="7" width="1.600" height="13.500" fill="#e03818"/>
<rect x="3.800" y="7" width="3.600" height="2.600" fill="#d8d8d0"/>
<rect x="3.800" y="9.800" width="3.600" height="4.200" fill="#6a92f0"/>
<rect x="3.800" y="14" width="3.600" height="7.500" fill="#12a030"/>
<rect x="7.800" y="8.500" width="10.500" height="1.300" fill="#4a7ae8"/>
<rect x="7.800" y="10.300" width="10.500" height="1" fill="#c8d8f4"/>
<rect x="7.800" y="13.300" width="10.500" height="2.600" fill="#12a030"/>
<rect x="15.800" y="13.300" width="2.500" height="6.500" fill="#12a030"/>
<rect x="7.800" y="16.500" width="8" height="1.200" fill="#f0d8e0"/>
<rect x="7.800" y="18.300" width="10.500" height="1.900" fill="#f02010"/>
<rect x="7.800" y="20.600" width="10.500" height="1.600" fill="#5a96f0"/>
</g><path d="M19 26.800l5.500 1l.3-3.200l8 8.300l-10 1.700l.8-3l-5.600-1.400z" fill="#e66a6a" stroke="#c84444" stroke-width=".5"/><path d="M24.800 25l7 7.500" stroke="#b03030" stroke-width=".9" stroke-dasharray="1.200 .8"/></svg>
<svg style="left:1384px;top:7px;" width="32" height="32" viewBox="0 0 32 32"><g transform="translate(10.2,-0.5) scale(1.16)">
<path d="M1 22c0-5 3.5-7 8-7.5h2c4.500.5 8 2.500 8 7.500z" fill="url(#gSuit)"/>
<path d="M7.500 14.500l2.500 4l2.500-4z" fill="#fff"/>
<path d="M9.400 15.500h1.200l.6 4.500l-1.200 1.300l-1.200-1.300z" fill="#1a1a1a"/>
<ellipse cx="10" cy="8.500" rx="4.600" ry="5.700" fill="url(#gSkin)"/>
<path d="M5.200 8c-.5-4.500 2-6.800 5-6.800c3.500 0 5.600 2.500 4.700 7c-.4-2-1-3.300-2.200-3.800c-2 .8-5 .5-6.300-.3c-.6.800-1 2-1.200 3.900z" fill="#1c1410"/>
</g>
<path d="M3 28l7-9.500" stroke="#b08a40" stroke-width="3.400" stroke-linecap="round"/>
<path d="M2.800 28.300l1.300-1.800" stroke="#6e6e6e" stroke-width="3.800" stroke-linecap="round"/>
<circle cx="14" cy="13.300" r="6.600" fill="url(#gGlass)" stroke="#dcd6cc" stroke-width="1.800"/>
<circle cx="14" cy="13.300" r="7.500" fill="none" stroke="#8a8278" stroke-width=".5"/></svg>
<svg style="left:1448px;top:7px;" width="32" height="32" viewBox="0 0 32 32"><rect x="13" y="4" width="16" height="23" rx="1.500" fill="#e4e6ea" stroke="#a9adb4" stroke-width=".8"/>
<rect x="15" y="6" width="15" height="23" rx="1.500" fill="#d3d6db" stroke="#9ca1a8" stroke-width=".8"/>
<circle cx="23" cy="18" r="7.200" fill="#eef0f2" stroke="#8d9299" stroke-width="1.600"/>
<path d="M23 18v-5.500M23 18l4 2.500" stroke="#555" stroke-width="1.200" fill="none"/>
<circle cx="27.500" cy="9" r="1.200" fill="#58b0e8"/><g transform="translate(0,5) scale(1.0)">
<path d="M1 22c0-5 3.5-7 8-7.5h2c4.500.5 8 2.500 8 7.500z" fill="url(#gSuit)"/>
<path d="M7.500 14.500l2.500 4l2.500-4z" fill="#fff"/>
<path d="M9.400 15.500h1.200l.6 4.500l-1.200 1.300l-1.200-1.300z" fill="#1a1a1a"/>
<ellipse cx="10" cy="8.500" rx="4.600" ry="5.700" fill="url(#gSkin)"/>
<path d="M5.200 8c-.5-4.500 2-6.800 5-6.800c3.500 0 5.600 2.500 4.700 7c-.4-2-1-3.300-2.200-3.800c-2 .8-5 .5-6.300-.3c-.6.800-1 2-1.200 3.900z" fill="#1c1410"/>
</g></svg>
<svg style="left:1523px;top:7px;" width="32" height="32" viewBox="0 0 32 32"><rect x="3" y="3" width="17" height="26" rx="1.800" fill="url(#gClip)" stroke="#9a6c10" stroke-width=".8"/>
<rect x="5.300" y="6" width="12.400" height="20" fill="#fbfbfb" stroke="#d0c8b0" stroke-width=".5"/>
<path d="M8 2.500h7v3.500h-7z" fill="#b8bcc2" stroke="#7e8288" stroke-width=".6"/>
<path d="M7 10h9M7 12.500h7M7 15h9M7 17.500h6M7 21l2-1l1.500 1.200l2-1.800" stroke="#8a8a8a" stroke-width=".9" fill="none"/>
<g><rect x="15" y="17" width="9.500" height="11.500" fill="url(#gGold)"/><ellipse cx="19.750" cy="28.500" rx="4.750" ry="1.800" fill="#b98a10"/>
<ellipse cx="19.750" cy="25" rx="4.750" ry="1.800" fill="none" stroke="#a87c0c" stroke-width=".5"/><ellipse cx="19.750" cy="21.500" rx="4.750" ry="1.800" fill="none" stroke="#a87c0c" stroke-width=".5"/>
<ellipse cx="19.750" cy="17" rx="4.750" ry="1.900" fill="#fbe27a" stroke="#c09818" stroke-width=".5"/></g>
<g><rect x="24" y="21.500" width="7" height="5" fill="url(#gGold)"/><ellipse cx="27.500" cy="26.500" rx="3.500" ry="1.400" fill="#b98a10"/><ellipse cx="27.500" cy="21.500" rx="3.500" ry="1.500" fill="#fbe27a" stroke="#c09818" stroke-width=".5"/></g></svg>
<svg style="left:1587px;top:7px;" width="32" height="32" viewBox="0 0 32 32"><g transform="translate(1.5,1) scale(0.86) skewY(9)">
<rect x="0" y="0" width="21" height="25" fill="#fbfcfe" stroke="#c4ceda" stroke-width=".7"/>
<rect x="1.800" y="2" width="6" height="1.100" fill="#6a6a70"/>
<rect x="1.800" y="3.600" width="16.500" height="2.100" fill="#6c9cf2"/>
<rect x="1.800" y="7" width="1.600" height="13.500" fill="#e03818"/>
<rect x="3.800" y="7" width="3.600" height="2.600" fill="#d8d8d0"/>
<rect x="3.800" y="9.800" width="3.600" height="4.200" fill="#6a92f0"/>
<rect x="3.800" y="14" width="3.600" height="7.500" fill="#12a030"/>
<rect x="7.800" y="8.500" width="10.500" height="1.300" fill="#4a7ae8"/>
<rect x="7.800" y="10.300" width="10.500" height="1" fill="#c8d8f4"/>
<rect x="7.800" y="13.300" width="10.500" height="2.600" fill="#12a030"/>
<rect x="15.800" y="13.300" width="2.500" height="6.500" fill="#12a030"/>
<rect x="7.800" y="16.500" width="8" height="1.200" fill="#f0d8e0"/>
<rect x="7.800" y="18.300" width="10.500" height="1.900" fill="#f02010"/>
<rect x="7.800" y="20.600" width="10.500" height="1.600" fill="#5a96f0"/>
</g><g transform="translate(4.5,1.8) scale(0.86) skewY(9)">
<rect x="0" y="0" width="21" height="25" fill="#fbfcfe" stroke="#c4ceda" stroke-width=".7"/>
<rect x="1.800" y="2" width="6" height="1.100" fill="#6a6a70"/>
<rect x="1.800" y="3.600" width="16.500" height="2.100" fill="#6c9cf2"/>
<rect x="1.800" y="7" width="1.600" height="13.500" fill="#e03818"/>
<rect x="3.800" y="7" width="3.600" height="2.600" fill="#d8d8d0"/>
<rect x="3.800" y="9.800" width="3.600" height="4.200" fill="#6a92f0"/>
<rect x="3.800" y="14" width="3.600" height="7.500" fill="#12a030"/>
<rect x="7.800" y="8.500" width="10.500" height="1.300" fill="#4a7ae8"/>
<rect x="7.800" y="10.300" width="10.500" height="1" fill="#c8d8f4"/>
<rect x="7.800" y="13.300" width="10.500" height="2.600" fill="#12a030"/>
<rect x="15.800" y="13.300" width="2.500" height="6.500" fill="#12a030"/>
<rect x="7.800" y="16.500" width="8" height="1.200" fill="#f0d8e0"/>
<rect x="7.800" y="18.300" width="10.500" height="1.900" fill="#f02010"/>
<rect x="7.800" y="20.600" width="10.500" height="1.600" fill="#5a96f0"/>
</g><g transform="translate(7.5,2.6) scale(0.86) skewY(9)">
<rect x="0" y="0" width="21" height="25" fill="#fbfcfe" stroke="#c4ceda" stroke-width=".7"/>
<rect x="1.800" y="2" width="6" height="1.100" fill="#6a6a70"/>
<rect x="1.800" y="3.600" width="16.500" height="2.100" fill="#6c9cf2"/>
<rect x="1.800" y="7" width="1.600" height="13.500" fill="#e03818"/>
<rect x="3.800" y="7" width="3.600" height="2.600" fill="#d8d8d0"/>
<rect x="3.800" y="9.800" width="3.600" height="4.200" fill="#6a92f0"/>
<rect x="3.800" y="14" width="3.600" height="7.500" fill="#12a030"/>
<rect x="7.800" y="8.500" width="10.500" height="1.300" fill="#4a7ae8"/>
<rect x="7.800" y="10.300" width="10.500" height="1" fill="#c8d8f4"/>
<rect x="7.800" y="13.300" width="10.500" height="2.600" fill="#12a030"/>
<rect x="15.800" y="13.300" width="2.500" height="6.500" fill="#12a030"/>
<rect x="7.800" y="16.500" width="8" height="1.200" fill="#f0d8e0"/>
<rect x="7.800" y="18.300" width="10.500" height="1.900" fill="#f02010"/>
<rect x="7.800" y="20.600" width="10.500" height="1.600" fill="#5a96f0"/>
</g><g transform="translate(10.5,3.4) scale(0.96) skewY(9)">
<rect x="0" y="0" width="21" height="25" fill="#fbfcfe" stroke="#c4ceda" stroke-width=".7"/>
<rect x="1.800" y="2" width="6" height="1.100" fill="#6a6a70"/>
<rect x="1.800" y="3.600" width="16.500" height="2.100" fill="#6c9cf2"/>
<rect x="1.800" y="7" width="1.600" height="13.500" fill="#e03818"/>
<rect x="3.800" y="7" width="3.600" height="2.600" fill="#d8d8d0"/>
<rect x="3.800" y="9.800" width="3.600" height="4.200" fill="#6a92f0"/>
<rect x="3.800" y="14" width="3.600" height="7.500" fill="#12a030"/>
<rect x="7.800" y="8.500" width="10.500" height="1.300" fill="#4a7ae8"/>
<rect x="7.800" y="10.300" width="10.500" height="1" fill="#c8d8f4"/>
<rect x="7.800" y="13.300" width="10.500" height="2.600" fill="#12a030"/>
<rect x="15.800" y="13.300" width="2.500" height="6.500" fill="#12a030"/>
<rect x="7.800" y="16.500" width="8" height="1.200" fill="#f0d8e0"/>
<rect x="7.800" y="18.300" width="10.500" height="1.900" fill="#f02010"/>
<rect x="7.800" y="20.600" width="10.500" height="1.600" fill="#5a96f0"/>
</g></svg>
<svg style="left:1663px;top:7px;" width="32" height="32" viewBox="0 0 32 32"><path d="M12 2l10-1.500l3 9l-13 3.500z" fill="#eef3f8" stroke="#c2ccd6" stroke-width=".6"/>
<path d="M14 4l8-1.200l2 6.500l-9.500 2.500z" fill="#dfe7ee"/>
<path d="M3 14c0-2 2-3 4-3.500l16-2c3-.3 6 1.500 6 4v9l-8 5l-18-5z" fill="url(#gPrn)"/>
<path d="M3 14l18 5l8-5.500" fill="none" stroke="#77828c" stroke-width=".8"/>
<path d="M2 24.500l7-4.500l12 3.500l-5 6z" fill="#f4f6f8" stroke="#9aa2aa" stroke-width=".7"/>
<path d="M6 24l6.500-3l7 2l-5.500 4z" fill="#8b939b"/>
<path d="M21 19v8.500l8-5v-9z" fill="#0e1114"/></svg>
<svg style="left:1727px;top:7px;" width="32" height="32" viewBox="0 0 32 32"><g transform="translate(3,0.5) scale(0.98) skewY(7)">
<rect x="0" y="0" width="21" height="25" fill="#fbfcfe" stroke="#c4ceda" stroke-width=".7"/>
<rect x="1.800" y="2" width="6" height="1.100" fill="#6a6a70"/>
<rect x="1.800" y="3.600" width="16.500" height="2.100" fill="#6c9cf2"/>
<rect x="1.800" y="7" width="1.600" height="13.500" fill="#e03818"/>
<rect x="3.800" y="7" width="3.600" height="2.600" fill="#d8d8d0"/>
<rect x="3.800" y="9.800" width="3.600" height="4.200" fill="#6a92f0"/>
<rect x="3.800" y="14" width="3.600" height="7.500" fill="#12a030"/>
<rect x="7.800" y="8.500" width="10.500" height="1.300" fill="#4a7ae8"/>
<rect x="7.800" y="10.300" width="10.500" height="1" fill="#c8d8f4"/>
<rect x="7.800" y="13.300" width="10.500" height="2.600" fill="#12a030"/>
<rect x="15.800" y="13.300" width="2.500" height="6.500" fill="#12a030"/>
<rect x="7.800" y="16.500" width="8" height="1.200" fill="#f0d8e0"/>
<rect x="7.800" y="18.300" width="10.500" height="1.900" fill="#f02010"/>
<rect x="7.800" y="20.600" width="10.500" height="1.600" fill="#5a96f0"/>
</g>
<rect x="1" y="15" width="11" height="15.500" rx="1.200" fill="url(#gClip)" stroke="#9a6c10" stroke-width=".7"/>
<rect x="2.600" y="17.500" width="7.800" height="11.500" fill="#fbfbfb"/>
<rect x="4.500" y="14" width="4" height="2.600" fill="#b8bcc2" stroke="#7e8288" stroke-width=".5"/>
<path d="M4 20.500h5M4 23h4.500M4 25.500h5" stroke="#9a9a9a" stroke-width=".8"/>
<path d="M19 13.500l7-1.500v-3l6 6.500l-6 4.500v-2.800l-7 1.500z" fill="#8ed04a" stroke="#4c9a18" stroke-width=".7"/>
<path d="M32 24.500l-7-1.500v-3l-6 5.500l6 5.500v-2.800l7 1.500z" fill="#8ed04a" stroke="#4c9a18" stroke-width=".7"/></svg>
<svg style="left:1801px;top:7px;" width="32" height="32" viewBox="0 0 32 32"><path d="M1 12c.5-2 2-3.500 4-4l25 7.500c1.500.8 2 2 1.200 3.300l-2.200 3.400c-.8 1-2 1.200-3.500.6c-5-2-8.500-.5-12.500-1.500c-4-1-9-4.500-12-9.300z" fill="#4a4a4e"/>
<path d="M1.500 13.500c3 4.500 7.500 8 11.500 8.800c4 1 7.500-.5 12.500 1.500c1.500.6 2.700.4 3.500-.6" fill="none" stroke="#c4c4c8" stroke-width="1.500"/>
<path d="M6 9.500l23 7.200M5 11.800l22 7.200" stroke="#9a9aa0" stroke-width="1.300" stroke-dasharray="1.600 .9"/>
<path d="M10 9.800l2.200.7M16.500 14.800l2.200.7M21.500 15l2.200.7" stroke="#e03a3a" stroke-width="1.300"/></svg>
<svg style="left:1866px;top:7px;" width="32" height="32" viewBox="0 0 32 32"><path d="M7 2h20v27h-20z" fill="#7a5a14"/>
<path d="M5 1.500l16 0v29l-16-2.500z" fill="url(#gDoor)" stroke="#6e5010" stroke-width=".6"/>
<path d="M5 1.500l2.500 1v26.500l-2.500-1z" fill="#e8c868"/>
<path d="M11 5v22M16 5v22.500" stroke="#8a6818" stroke-width=".9"/>
<rect x="8" y="15" width="2.200" height="1.300" fill="#f4e29a"/>
<path d="M19.500 19.500l9.500 8M29 19.500l-9.500 8" stroke="#f04a5a" stroke-width="3.200" stroke-linecap="round"/></svg>
<div style="left:521px;top:155px;width:19px;height:15px;background:#e8e8e8;border:1px solid #b4b4b4;box-sizing:border-box;"></div>
<svg style="left:522.5px;top:156px;" width="16" height="13" viewBox="0 0 16 13"><rect x=".6" y="2" width="14.400" height="10.400" fill="#000"/>
<rect x="1.900" y="3" width="4.800" height="6.600" fill="#fff"/><rect x="8.900" y="3" width="4.800" height="6.600" fill="#fff"/>
<path d="M2.800 2.200v-1.400h3.800l1.200 1.400M12.800 2.200v-1.400h-3.800l-1.200 1.400" fill="none" stroke="#000" stroke-width="1.100"/>
<rect x="2.200" y="10" width="4" height="1" fill="#9a9a9a"/>
<circle cx="6.700" cy="5.700" r="2.800" fill="#00f2f2" stroke="#111" stroke-width=".7" stroke-dasharray=".9 .7"/>
<path d="M8.700 7.700l5 4.600" stroke="#1616f0" stroke-width="1.700"/><path d="M8.300 8.300l4.600 4.400" stroke="#c8c8c8" stroke-width=".6"/></svg>
<svg style="left:682.5px;top:178px;" width="16" height="13" viewBox="0 0 16 13"><rect x=".6" y="2" width="14.400" height="10.400" fill="#000"/>
<rect x="1.900" y="3" width="4.800" height="6.600" fill="#fff"/><rect x="8.900" y="3" width="4.800" height="6.600" fill="#fff"/>
<path d="M2.800 2.200v-1.400h3.800l1.200 1.400M12.800 2.200v-1.400h-3.800l-1.200 1.400" fill="none" stroke="#000" stroke-width="1.100"/>
<rect x="2.200" y="10" width="4" height="1" fill="#9a9a9a"/>
<circle cx="6.700" cy="5.700" r="2.800" fill="#00f2f2" stroke="#111" stroke-width=".7" stroke-dasharray=".9 .7"/>
<path d="M8.700 7.700l5 4.600" stroke="#1616f0" stroke-width="1.700"/><path d="M8.300 8.300l4.600 4.400" stroke="#c8c8c8" stroke-width=".6"/></svg>
<div style="left:938px;top:126px;width:19px;height:15px;background:#e8e8e8;border:1px solid #b4b4b4;box-sizing:border-box;"></div>
<svg style="left:939.6px;top:127.4px;" width="16" height="13" viewBox="0 0 16 13"><rect x=".6" y="2" width="14.400" height="10.400" fill="#000"/>
<rect x="1.900" y="3" width="4.800" height="6.600" fill="#fff"/><rect x="8.900" y="3" width="4.800" height="6.600" fill="#fff"/>
<path d="M2.800 2.200v-1.400h3.800l1.200 1.400M12.800 2.200v-1.400h-3.800l-1.200 1.400" fill="none" stroke="#000" stroke-width="1.100"/>
<rect x="2.200" y="10" width="4" height="1" fill="#9a9a9a"/>
<circle cx="6.700" cy="5.700" r="2.800" fill="#00f2f2" stroke="#111" stroke-width=".7" stroke-dasharray=".9 .7"/>
<path d="M8.700 7.700l5 4.600" stroke="#1616f0" stroke-width="1.700"/><path d="M8.300 8.300l4.600 4.400" stroke="#c8c8c8" stroke-width=".6"/></svg>
<svg style="left:917px;top:170.5px;" width="15" height="16" viewBox="0 0 15 16"><rect x="1.500" y="3" width="12" height="12" rx="1" fill="#fdfdfd" stroke="#a2aaaa" stroke-width=".9"/>
<rect x="1" y="2.500" width="13" height="3.700" fill="#f6c81e"/><rect x="1" y="2.500" width="13" height="1" fill="#d89a18"/>
<path d="M4.200 .6v3.200M11.200 .6v3.200" stroke="#6a7a8c" stroke-width="1.500"/></svg>
<span class="t" style="left:922.48px;top:176.00px;font-size:8px;line-height:11px;color:#111;">7</span>
<svg style="left:917px;top:194.5px;" width="15" height="16" viewBox="0 0 15 16"><rect x="1.500" y="3" width="12" height="12" rx="1" fill="#fdfdfd" stroke="#a2aaaa" stroke-width=".9"/>
<rect x="1" y="2.500" width="13" height="3.700" fill="#f6c81e"/><rect x="1" y="2.500" width="13" height="1" fill="#d89a18"/>
<path d="M4.200 .6v3.200M11.200 .6v3.200" stroke="#6a7a8c" stroke-width="1.500"/></svg>
<span class="t" style="left:922.48px;top:200.00px;font-size:8px;line-height:11px;color:#111;">7</span>
<svg style="left:12px;top:274px;" width="16" height="16" viewBox="0 0 16 16"><circle cx="8" cy="8" r="5.600" fill="none" stroke="#000" stroke-width="3.400" stroke-dasharray="2.200 2.200"/><circle cx="8" cy="8" r="4" fill="#f0f0f0" stroke="#000" stroke-width="1.200"/><circle cx="8" cy="8" r="1.800" fill="none" stroke="#000" stroke-width="1"/></svg>
<svg style="left:36px;top:274px;" width="16" height="16" viewBox="0 0 16 16"><path d="M8 1l6.500 2.500v8.500l-6.500 3.500l-6.500-3.500v-8.500z" fill="#c89058"/><path d="M8 6v9.500l-6.500-3.500v-8.500z" fill="#e8b880"/><path d="M1.500 3.500l6.500 2.500l6.500-2.500" fill="none" stroke="#a06830" stroke-width=".8"/><path d="M8 6v9" stroke="#8a5420" stroke-width=".8"/><circle cx="5" cy="9" r=".8" fill="#fff"/><circle cx="11" cy="9" r=".8" fill="#fff"/></svg>
<svg style="left:12px;top:296px;" width="16" height="16" viewBox="0 0 16 16"><path d="M0 1l4 3M8 0v3M16 1l-4 3M0 8h3M16 8h-3M0 15l4-3M8 16v-2M16 15l-4-3" stroke="#ffee00" stroke-width="1.300"/><path d="M4 2.500h5l3.500 3.500v8h-8.500z" fill="#fff" stroke="#000" stroke-width="1.100"/><path d="M9 2.500v3.500h3.500" fill="none" stroke="#000" stroke-width="1"/></svg>
<svg style="left:36px;top:296px;" width="16" height="16" viewBox="0 0 16 16"><path d="M6.300 1.500h3.400v4.800h4.800v3.400h-4.800v4.800h-3.400v-4.800h-4.800v-3.400h4.800z" fill="#00c000"/><path d="M9.700 1.500v4.800h4.800v3.400h-4.800v4.800h-3.400" fill="none" stroke="#006000" stroke-width="1"/></svg>
<svg style="left:12px;top:318px;" width="16" height="16" viewBox="0 0 16 16"><path d="M0 1l4 3M8 0v3M16 1l-4 3M0 8h3M16 8h-3M0 15l4-3M8 16v-2M16 15l-4-3" stroke="#ffee00" stroke-width="1.300"/><path d="M4 2.500h5l3.500 3.500v8h-8.500z" fill="#fff" stroke="#000" stroke-width="1.100"/><path d="M4.500 4h3.500v2h-3.500zM4.500 7.500h7.500v2h-7.500zM4.500 11h7.500v2h-7.500z" fill="#0020ff"/></svg>
<svg style="left:36px;top:318px;" width="16" height="16" viewBox="0 0 16 16"><rect x="2.500" y="3" width="6" height="6" fill="#c8c8d8" stroke="#2030a0" stroke-width="1"/><circle cx="5.500" cy="6" r="4.300" fill="none" stroke="#e00000" stroke-width="1.500"/><path d="M8.800 9.300l5.700 5" stroke="#f00000" stroke-width="2.600"/></svg>
<svg style="left:12px;top:340px;" width="16" height="16" viewBox="0 0 16 16"><path d="M1.500 1.500h9l4 4v9h-13z" fill="#fff" stroke="#000" stroke-width="1.200"/><path d="M10.500 1.500v4h4" fill="none" stroke="#000" stroke-width="1"/><path d="M5.500 4h3v3h3v3h-3v3h-3v-3h-3v-3h3z" fill="#00a800" stroke="#005800" stroke-width=".6"/></svg>
<span class="t" style="left:39.83px;top:338.00px;font-size:15px;line-height:21px;color:#107010;">$</span>
<svg style="left:12px;top:362px;" width="16" height="16" viewBox="0 0 16 16"><path d="M2 12l1.500-8M14 13h-12" stroke="#909090" stroke-width="1.300"/><rect x="4" y="2.500" width="9" height="10.500" rx="1.500" fill="#4870d8"/><ellipse cx="8.500" cy="3" rx="4.500" ry="1.600" fill="#2848a0"/><path d="M8.500 5.500v6" stroke="#c8d8ff" stroke-width="2.200"/><ellipse cx="8.500" cy="13" rx="4.500" ry="1.200" fill="#8898b8"/></svg>
<div style="left:35.5px;top:362px;width:16px;height:16px;font-size:8px;line-height:8px;font-weight:700"><span class="t" style="left:0px;top:-1px;color:#c00020;font-size:8.500px">A</span><span class="t" style="left:5.500px;top:3.500px;color:#0018c0;font-size:8px">B</span><span class="t" style="left:9.500px;top:7px;color:#111;font-size:8.500px">C</span><span class="t" style="left:6px;top:1.500px;width:3px;height:1.500px;background:#e00030"></span><span class="t" style="left:11px;top:6px;width:3px;height:3px;border-radius:2px;background:#20d040"></span><span class="t" style="left:10px;top:13px;width:4px;height:1.500px;background:#f0a020"></span></div>
<svg style="left:12px;top:384px;" width="16" height="16" viewBox="0 0 16 16"><path d="M6 1.500h6l3 3v10.500h-9z" fill="#fff" stroke="#000" stroke-width="1.100" stroke-dasharray="1.500 1"/><path d="M2 2l9 9" stroke="#000" stroke-width="2"/><path d="M2.300 2.300l8 8" stroke="#ffe800" stroke-width="1"/><path d="M1 7.500h6.500l2 2v3l-2 1.500h-5l-1.500-1.500z" fill="#ffee30" stroke="#000" stroke-width="1"/><path d="M0 8v5" stroke="#00c8e8" stroke-width="1.600"/></svg>
<svg style="left:36px;top:384px;" width="16" height="16" viewBox="0 0 16 16"><rect x=".5" y=".5" width="15" height="15" fill="#00e8ff"/><rect x="1.800" y="1.800" width="12.400" height="12.400" fill="#f0e8e8" stroke="#800000" stroke-width="1.600"/><path d="M6.200 5v6M9.800 5v6" stroke="#8a0000" stroke-width="2"/></svg>
<svg style="left:12px;top:406px;" width="16" height="16" viewBox="0 0 16 16"><path d="M2 3h11M2 3l8 9.500" stroke="#80e080" stroke-width="1.100"/><path d="M10 6l5 2v7l-5-1.500z" fill="#d0d4dc"/><path d="M10.500 11.500l4.500 1.500" stroke="#3858a0" stroke-width="1.800"/><circle cx="2" cy="3" r="1.700" fill="#1840e0"/><circle cx="13" cy="3" r="1.700" fill="#1840e0"/><circle cx="10" cy="12.500" r="1.700" fill="#1840e0"/></svg>
<svg style="left:36px;top:406px;" width="16" height="16" viewBox="0 0 16 16"><path d="M3.500 1.500h6l3.500 3.500v9.500h-9.500z" fill="#fff" stroke="#000" stroke-width="1.200"/><path d="M9.500 1.500v3.500h3.500" fill="none" stroke="#000" stroke-width="1"/><path d="M5.500 6.500h5M5.500 8.800h5M5.500 11.100h5" stroke="#000" stroke-width="1.100"/></svg>
<div style="left:1890px;top:296.5px;width:16px;height:16px;font-size:8px;line-height:8px;font-weight:700"><span class="t" style="left:0px;top:-1px;color:#c00020;font-size:8.500px">A</span><span class="t" style="left:5.500px;top:3.500px;color:#0018c0;font-size:8px">B</span><span class="t" style="left:9.500px;top:7px;color:#111;font-size:8.500px">C</span><span class="t" style="left:6px;top:1.500px;width:3px;height:1.500px;background:#e00030"></span><span class="t" style="left:11px;top:6px;width:3px;height:3px;border-radius:2px;background:#20d040"></span><span class="t" style="left:10px;top:13px;width:4px;height:1.500px;background:#f0a020"></span></div>
<svg style="left:1893px;top:369px;" width="11" height="12" viewBox="0 0 11 12"><path d="M0 0h11l-5.500 6z" fill="#c6eec6"/><path d="M11 0v12h-11z" fill="#5aa85a"/><path d="M11 12h-11l5.500-6z" fill="#468c46"/></svg>
<svg style="left:1892px;top:384px;" width="11" height="16" viewBox="0 0 11 16"><path d="M5.500 .3l4.300 8.700h-2.800v6.700h-3v-6.700h-2.800z" fill="#ff0000" stroke="#300000" stroke-width=".6"/></svg>
<svg style="left:1892px;top:409.3px;" width="11" height="16" viewBox="0 0 11 16"><path d="M5.500 15.700l4.300-8.700h-2.800v-6.700h-3v6.700h-2.800z" fill="#ff0000" stroke="#300000" stroke-width=".6"/></svg>
<svg style="left:82px;top:935px;" width="26" height="26" viewBox="0 0 26 26"><circle cx="13" cy="13" r="11.900" fill="#c8c8c8" opacity=".85"/><circle cx="13" cy="13" r="11.900" fill="none" stroke="#b4b4b4" stroke-width=".6"/><circle cx="13" cy="13" r="10.200" fill="url(#gGreenB)"/><path d="M3 12.500a10 10 0 0 1 20 0c-5-2.200-15-2.200-20 0z" fill="#fff" opacity=".3"/><path d="M11.300 5.500h3.400v5.800h5.800v3.400h-5.800v5.800h-3.400v-5.800h-5.800v-3.400h5.800z" fill="#f4f4f4"/></svg>
<svg style="left:415px;top:934px;" width="26" height="26" viewBox="0 0 26 26"><circle cx="13" cy="13" r="11.900" fill="#c8c8c8" opacity=".85"/><circle cx="13" cy="13" r="11.900" fill="none" stroke="#b4b4b4" stroke-width=".6"/><circle cx="13" cy="13" r="10.200" fill="url(#gGrayB)"/><path d="M3 12.500a10 10 0 0 1 20 0c-5-2.200-15-2.200-20 0z" fill="#fff" opacity=".3"/><rect x="5" y="11" width="16" height="4" rx=".5" fill="#f6f6f6"/></svg>
<svg style="left:737px;top:934px;" width="26" height="26" viewBox="0 0 26 26"><circle cx="13" cy="13" r="11.900" fill="#c8c8c8" opacity=".85"/><circle cx="13" cy="13" r="11.900" fill="none" stroke="#b4b4b4" stroke-width=".6"/><circle cx="13" cy="13" r="10.200" fill="url(#gGrayB)"/><path d="M3 12.500a10 10 0 0 1 20 0c-5-2.200-15-2.200-20 0z" fill="#fff" opacity=".3"/><path d="M9.500 7.500h6l-1.500 12h-6z" fill="#f4f4f4"/><path d="M17.500 6l-4.500 8.500l-.5 2.500l2-1.500l4.500-8.500z" fill="#d8d8d8" stroke="#fff" stroke-width=".6"/></svg>
<svg style="left:1380px;top:934px;" width="26" height="26" viewBox="0 0 26 26"><circle cx="13" cy="13" r="11.900" fill="#c8c8c8" opacity=".85"/><circle cx="13" cy="13" r="11.900" fill="none" stroke="#b4b4b4" stroke-width=".6"/><circle cx="13" cy="13" r="10.200" fill="url(#gRedB)"/><path d="M3 12.500a10 10 0 0 1 20 0c-5-2.200-15-2.200-20 0z" fill="#fff" opacity=".3"/><path d="M8.500 8.500l9 9M17.500 8.500l-9 9" stroke="#e2e2e2" stroke-width="3.200"/></svg>
<svg style="left:1701px;top:934px;" width="26" height="26" viewBox="0 0 26 26"><circle cx="13" cy="13" r="11.900" fill="#c8c8c8" opacity=".85"/><circle cx="13" cy="13" r="11.900" fill="none" stroke="#b4b4b4" stroke-width=".6"/><circle cx="13" cy="13" r="10.200" fill="url(#gGreenB)"/><path d="M3 12.500a10 10 0 0 1 20 0c-5-2.200-15-2.200-20 0z" fill="#fff" opacity=".3"/><path d="M7.500 13a5.500 5.500 0 0 1 9.500-3.600" fill="none" stroke="#fff" stroke-width="2.600"/><path d="M18.500 5.500v5.800h-5.800z" fill="#fff"/><path d="M18.500 13a5.500 5.500 0 0 1-9.500 3.600" fill="none" stroke="#fff" stroke-width="2.600"/><path d="M7.500 20.500v-5.800h5.800z" fill="#fff"/></svg>
<svg style="left:1057px;top:936px;" width="28" height="22" viewBox="0 0 28 22"><path d="M.400 10.400l4.900-5.200l6.100 5.200l11-10.200l5.400 5l-16.400 16.600z" fill="url(#gChk)" stroke="#1f9418" stroke-width=".8" stroke-linejoin="round"/><path d="M1 10.400l4.300-4.600l6.100 5.200l11-10.200l4.600 4.400l-2.500 2.600c-6 3.800-14 6-21 5z" fill="#fff" opacity=".38"/></svg>
<svg style="left:1883px;top:933px;" width="24" height="30" viewBox="0 0 24 30"><ellipse cx="12" cy="27.500" rx="8" ry="1.800" fill="#bdbdbd"/><path d="M12 1l8.600 12h-4.700v14h-7.800v-14h-4.700z" fill="url(#gArr)" stroke="#0a6a14" stroke-width=".7"/></svg>
<div style="left:0px;top:0px;width:1920px;height:1px;background:#a0a0a0;"></div>
<div style="left:0px;top:1px;width:1918px;height:1px;background:#696969;"></div>
<div style="left:2px;top:2px;width:1357px;height:1px;background:#a9a6a2;"></div>
<div style="left:1359px;top:2px;width:557px;height:1px;background:#d8d8d8;"></div>
<div style="left:0px;top:0px;width:1px;height:989px;background:#a0a0a0;"></div>
<div style="left:1px;top:1px;width:1px;height:988px;background:#696969;"></div>
<div style="left:2px;top:59px;width:1px;height:930px;background:#fff;"></div>
<div style="left:2px;top:2px;width:1px;height:57px;background:#a9a7a4;"></div>
<div style="left:1916px;top:3px;width:1px;height:986px;background:#fff;"></div>
<div style="left:1917px;top:3px;width:1px;height:986px;background:#0c3cb0;"></div>
<div style="left:1918px;top:3px;width:1px;height:986px;background:#8ea2d6;"></div>
<div style="left:1919px;top:3px;width:1px;height:986px;background:#fbf8f4;"></div>
<div style="left:604px;top:222px;width:654px;height:484px;background:#f0f0f0;border:1px solid #6f6f6f;box-sizing:border-box;box-shadow:0 3px 14px 2px rgba(0,0,0,.38);"></div>
<div style="left:605px;top:223px;width:652px;height:30px;background:#fff;"></div>
<div style="left:605px;top:253px;width:651px;height:1px;background:#a6a6a6;"></div>
<span class="t" style="left:634.00px;top:230.00px;font-size:12px;line-height:17px;color:#000;font-weight:400;-webkit-text-stroke:0;letter-spacing:-0.250px;">Stok Paket Arama</span>
<svg style="left:1133px;top:230px;" width="20" height="16" viewBox="0 0 20 16"><path d="M5 7.5h10.4" stroke="#000" stroke-width="1.1"/></svg>
<svg style="left:1178px;top:229px;" width="20" height="18" viewBox="0 0 20 18"><rect x="5.5" y="3.5" width="9" height="9" fill="none" stroke="#cfcfcf" stroke-width="1"/></svg>
<svg style="left:1224px;top:228px;" width="20" height="18" viewBox="0 0 20 18"><path d="M5 4.5l10 10M15 4.5l-10 10" stroke="#000" stroke-width="1.0"/></svg>
<div style="left:605px;top:254px;width:652px;height:27px;background:linear-gradient(90deg,#034e92 0%,#2a6aa3 15%,#4f84b3 27%,#7da3c5 42%,#8fadc9 48.3%,#a9c0d5 56.9%,#cdd9e3 65.5%,#e0e6eb 71.3%,#eeeff0 77%,#f0f0f0 80%);"></div>
<span class="t" style="left:615.30px;top:255.00px;font-size:19px;line-height:27px;color:#fff;letter-spacing:0.489px;text-shadow:1px 1px 1px rgba(0,0,40,.5);">Stok Paket Arama</span>
<span class="t" style="left:645.10px;top:295.00px;font-size:11px;line-height:15px;color:#000;letter-spacing:0.815px;">Arama</span>
<div style="left:686px;top:291px;width:137px;height:21px;background:#fff;border:1px solid #0078d7;box-sizing:border-box;"></div>
<span class="t" style="left:649.00px;top:323.00px;font-size:11px;line-height:15px;color:#000;letter-spacing:0.152px;">Grubu</span>
<div style="left:686px;top:319px;width:137px;height:21px;background:#fff;border:1px solid #7a7a7a;box-sizing:border-box;"></div>
<svg style="left:806px;top:325px;" width="16" height="10" viewBox="0 0 16 10"><path d="M4 2.5l4 4l4-4" fill="none" stroke="#444" stroke-width="1.1"/></svg>
<span class="t" style="left:626.00px;top:351.00px;font-size:11px;line-height:15px;color:#000;letter-spacing:0.276px;">Ara Grubu</span>
<div style="left:686px;top:347px;width:137px;height:21px;background:#fff;border:1px solid #7a7a7a;box-sizing:border-box;"></div>
<svg style="left:806px;top:353px;" width="16" height="10" viewBox="0 0 16 10"><path d="M4 2.5l4 4l4-4" fill="none" stroke="#444" stroke-width="1.1"/></svg>
<span class="t" style="left:630.00px;top:379.00px;font-size:11px;line-height:15px;color:#000;letter-spacing:0.236px;">Alt Grubu</span>
<div style="left:686px;top:375px;width:137px;height:21px;background:#fff;border:1px solid #7a7a7a;box-sizing:border-box;"></div>
<svg style="left:806px;top:381px;" width="16" height="10" viewBox="0 0 16 10"><path d="M4 2.5l4 4l4-4" fill="none" stroke="#444" stroke-width="1.1"/></svg>
<div style="left:687px;top:403px;width:103px;height:26px;background:#e1e1e1;border:1px solid #adadad;box-sizing:border-box;"></div>
<span class="t" style="left:730.00px;top:409.00px;font-size:11px;line-height:15px;color:#000;letter-spacing:0.219px;">Filtrele</span>
<div style="left:795px;top:403px;width:27px;height:26px;background:#e1e1e1;border:1px solid #adadad;box-sizing:border-box;"></div>
<div style="left:611px;top:447px;width:208px;height:80px;border:1px solid #dcdcdc;box-sizing:border-box;"></div>
<div style="left:618px;top:441px;width:83.25px;height:13px;background:#f0f0f0;"></div>
<span class="t" style="left:621.00px;top:440.00px;font-size:11px;line-height:15px;color:#000;letter-spacing:0.546px;">Arama Kriteri</span>
<div style="left:611px;top:535px;width:208px;height:72px;border:1px solid #dcdcdc;box-sizing:border-box;"></div>
<div style="left:618px;top:529px;width:34.5px;height:13px;background:#f0f0f0;"></div>
<span class="t" style="left:621.00px;top:528.00px;font-size:11px;line-height:15px;color:#000;letter-spacing:0.764px;">Aktif</span>
<svg style="left:618.4px;top:458.7px;" width="14" height="14" viewBox="0 0 14 14"><circle cx="7" cy="7" r="6" fill="#fff" stroke="#333" stroke-width="1"/><circle cx="7" cy="7" r="3.3" fill="#222"/></svg>
<span class="t" style="left:635.00px;top:459.00px;font-size:11px;line-height:15px;color:#000;letter-spacing:0.360px;">Paket Kodu</span>
<svg style="left:618.4px;top:481.7px;" width="14" height="14" viewBox="0 0 14 14"><circle cx="7" cy="7" r="6" fill="#fff" stroke="#333" stroke-width="1"/></svg>
<span class="t" style="left:635.00px;top:482.00px;font-size:11px;line-height:15px;color:#000;letter-spacing:0.347px;">Barkodu</span>
<svg style="left:618.4px;top:504.6px;" width="14" height="14" viewBox="0 0 14 14"><circle cx="7" cy="7" r="6" fill="#fff" stroke="#333" stroke-width="1"/></svg>
<span class="t" style="left:635.00px;top:505.00px;font-size:11px;line-height:15px;color:#000;letter-spacing:0.560px;">Paket Adı</span>
<svg style="left:618.4px;top:545.8px;" width="14" height="14" viewBox="0 0 14 14"><circle cx="7" cy="7" r="6" fill="#fff" stroke="#333" stroke-width="1"/><circle cx="7" cy="7" r="3.3" fill="#222"/></svg>
<span class="t" style="left:635.00px;top:546.00px;font-size:11px;line-height:15px;color:#000;letter-spacing:0.505px;">Evet</span>
<svg style="left:618.4px;top:565.7px;" width="14" height="14" viewBox="0 0 14 14"><circle cx="7" cy="7" r="6" fill="#fff" stroke="#333" stroke-width="1"/></svg>
<span class="t" style="left:635.00px;top:566.00px;font-size:11px;line-height:15px;color:#000;letter-spacing:0.621px;">Hayır</span>
<svg style="left:618.4px;top:585.5px;" width="14" height="14" viewBox="0 0 14 14"><circle cx="7" cy="7" r="6" fill="#fff" stroke="#333" stroke-width="1"/></svg>
<span class="t" style="left:635.00px;top:586.00px;font-size:11px;line-height:15px;color:#000;letter-spacing:0.654px;">Tümü</span>
<div style="left:826px;top:284px;width:430px;height:201px;background:#fff;border:1px solid #a8a8a8;border-top:1px solid #8e8e8e;border-left:1px solid #8e8e8e;box-sizing:border-box;"></div>
<svg style="left:828.5px;top:288.5px;" width="8" height="10" viewBox="0 0 8 10"><rect x="0.5" y="1" width="2" height="2"/><rect x="5.5" y="1" width="2" height="2"/><rect x="0.5" y="6" width="2" height="2"/><rect x="5.5" y="6" width="2" height="2"/></svg>
<div style="left:828px;top:303px;width:426px;height:1px;background:#e0e0e0;"></div>
<div style="left:828px;top:321px;width:426px;height:1px;background:#ebebeb;"></div>
<div style="left:839px;top:286px;width:1px;height:36px;background:#e0e0e0;"></div>
<div style="left:940px;top:286px;width:1px;height:36px;background:#e0e0e0;"></div>
<div style="left:1118px;top:286px;width:1px;height:36px;background:#e0e0e0;"></div>
<div style="left:1219px;top:286px;width:1px;height:36px;background:#e0e0e0;"></div>
<span class="t" style="left:842.20px;top:288.00px;font-size:11px;line-height:15px;color:#000;letter-spacing:0.299px;">Paket Kodu</span>
<span class="t" style="left:943.00px;top:288.00px;font-size:11px;line-height:15px;color:#000;letter-spacing:0.523px;">Paket Adı</span>
<span class="t" style="left:1121.00px;top:288.00px;font-size:11px;line-height:15px;color:#000;letter-spacing:0.027px;">Özel Kodu</span>
<div style="left:1221px;top:286px;width:33px;height:17px;overflow:hidden">
<span class="t" style="left:0.90px;top:2.00px;font-size:11px;line-height:15px;color:#000;letter-spacing:0.027px;">Özel Kodu</span>
</div>
<div style="left:828px;top:467px;width:426px;height:16px;background:#f0f0f0;"></div>
<svg style="left:828px;top:467px;" width="17" height="16" viewBox="0 0 17 16"><path d="M10.5 4.0l-4 4l4 4" fill="none" stroke="#404040" stroke-width="1.7"/></svg>
<svg style="left:1237px;top:467px;" width="17" height="16" viewBox="0 0 17 16"><path d="M6.5 4.0l4 4l-4 4" fill="none" stroke="#404040" stroke-width="1.7"/></svg>
<div style="left:845px;top:467px;width:17px;height:16px;background:#cdcdcd;"></div>
<div style="left:941px;top:486px;width:200px;height:11px;background:#f7f7f7;border:1px solid #6d6d6d;box-sizing:border-box;"></div>
<svg style="left:941px;top:486px;" width="200" height="11" viewBox="0 0 200 11"><path d="M6.800 3.200h13l-6.500 6.600z M180 3.200h13l-6.500 6.600z" fill="#000080"/><path d="M25 4.5h152M25 7h152" stroke="#000080" stroke-width="1" stroke-dasharray="1 1.53"/></svg>
<div style="left:826px;top:505px;width:430px;height:1px;background:#dcdcdc;"></div>
<div style="left:833px;top:499px;width:79px;height:13px;background:#f0f0f0;"></div>
<span class="t" style="left:836.00px;top:498.00px;font-size:11px;line-height:15px;color:#000;letter-spacing:0.616px;">Paket İçeriği</span>
<div style="left:828px;top:513px;width:426px;height:133px;background:#fff;border:1px solid #a8a8a8;border-top:1px solid #8e8e8e;border-left:1px solid #8e8e8e;box-sizing:border-box;"></div>
<svg style="left:830.5px;top:518.5px;" width="8" height="10" viewBox="0 0 8 10"><rect x="0.5" y="1" width="2" height="2"/><rect x="5.5" y="1" width="2" height="2"/><rect x="0.5" y="6" width="2" height="2"/><rect x="5.5" y="6" width="2" height="2"/></svg>
<div style="left:830px;top:532px;width:422px;height:1px;background:#e0e0e0;"></div>
<div style="left:830px;top:550px;width:422px;height:1px;background:#ebebeb;"></div>
<div style="left:841px;top:515px;width:1px;height:36px;background:#e0e0e0;"></div>
<div style="left:942px;top:515px;width:1px;height:36px;background:#e0e0e0;"></div>
<div style="left:1043px;top:515px;width:1px;height:36px;background:#e0e0e0;"></div>
<div style="left:1244px;top:515px;width:1px;height:36px;background:#e0e0e0;"></div>
<span class="t" style="left:844.00px;top:517.00px;font-size:11px;line-height:15px;color:#000;letter-spacing:0.214px;">Stok Kodu</span>
<span class="t" style="left:945.30px;top:517.00px;font-size:11px;line-height:15px;color:#000;letter-spacing:0.281px;">Barkodu</span>
<span class="t" style="left:1046.00px;top:517.00px;font-size:11px;line-height:15px;color:#000;letter-spacing:0.385px;">Stok Adı</span>
<div style="left:1245px;top:515px;width:6.5px;height:17px;overflow:hidden">
<span class="t" style="left:1.50px;top:2.00px;font-size:11px;line-height:15px;color:#000;">Stok</span>
</div>
<div style="left:830px;top:628px;width:422px;height:15px;background:#f0f0f0;"></div>
<svg style="left:830px;top:628px;" width="17" height="15" viewBox="0 0 17 15"><path d="M10.5 3.5l-4 4l4 4" fill="none" stroke="#404040" stroke-width="1.7"/></svg>
<svg style="left:1235px;top:628px;" width="17" height="15" viewBox="0 0 17 15"><path d="M6.5 3.5l4 4l-4 4" fill="none" stroke="#404040" stroke-width="1.7"/></svg>
<div style="left:847px;top:628px;width:17px;height:15px;background:#cdcdcd;"></div>
<div style="left:826px;top:646px;width:431px;height:39px;background:#f7f7f7;"></div>
<div style="left:826px;top:685px;width:431px;height:1px;background:#b4b4b4;"></div>
<div style="left:828px;top:649px;width:297px;height:35px;background:#e1e1e1;border:1px solid #adadad;box-sizing:border-box;"></div>
<div style="left:1127px;top:649px;width:128px;height:35px;background:#e1e1e1;border:1px solid #adadad;box-sizing:border-box;"></div>
<span class="t" style="left:971.60px;top:657.00px;font-size:14px;line-height:20px;color:#000;letter-spacing:-0.520px;">Tamam</span>
<span class="t" style="left:1186.30px;top:657.00px;font-size:14px;line-height:20px;color:#000;letter-spacing:-0.315px;">Vazgeç</span>
<div style="left:605px;top:686px;width:652px;height:1px;background:#d7d7d7;"></div>
<span class="t" style="left:663.00px;top:690.00px;font-size:11px;line-height:15px;color:#000;letter-spacing:0.313px;">Kayıt Sayısı</span>
<div style="left:729px;top:689px;width:1px;height:15px;background:#d9d9d9;"></div>
<div style="left:730px;top:689px;width:1px;height:15px;background:#fff;"></div>
<div style="left:804px;top:689px;width:1px;height:15px;background:#d9d9d9;"></div>
<div style="left:805px;top:689px;width:1px;height:15px;background:#fff;"></div>
<svg style="left:1243px;top:691px;" width="13" height="13" viewBox="0 0 13 13"><g fill="#bfbfbf"><rect x="9" y="1" width="2" height="2"/><rect x="5" y="5" width="2" height="2"/><rect x="9" y="5" width="2" height="2"/><rect x="1" y="9" width="2" height="2"/><rect x="5" y="9" width="2" height="2"/><rect x="9" y="9" width="2" height="2"/></g></svg>
<svg style="left:613px;top:229px;" width="16" height="16" viewBox="0 0 16 16"><rect x="0" y="0" width="16" height="16" rx="3.200" fill="#26398e"/><path d="M3.600 6.800a4.400 4.400 0 0 1 8.800 0" fill="none" stroke="#e8ecf8" stroke-width="1.500" stroke-dasharray="1.200 .800"/><path d="M5 6.900a3 3 0 0 1 6 0" fill="none" stroke="#cfd6f0" stroke-width=".8"/><path d="M3.200 7h9.600" stroke="#f4f6fc" stroke-width=".9"/><path d="M4.600 7.800v3.200M6.900 7.800v3.200M9.100 7.800v3.200M11.400 7.800v3.200" stroke="#e4e8f6" stroke-width="1.200"/><path d="M3 11.600h10" stroke="#fff" stroke-width=".9"/><rect x="3.400" y="13.100" width="9.200" height="1.400" fill="#b8c0e4"/></svg>
<svg style="left:709px;top:409px;" width="18" height="16" viewBox="0 0 18 16"><path d="M.800 1.200h15.400l-6.700 7.800v5.500h-2v-5.500z" fill="#3d8eff"/><path d="M4 2.200h9l-4.500 5.200z" fill="#9cc8ff"/></svg>
<svg style="left:799px;top:406px;" width="22" height="20" viewBox="0 0 22 20"><path d="M2 16.600h16.500" stroke="#3a3a3a" stroke-width="1.400"/><g transform="translate(5.200,15.600) rotate(-42)"><rect x="0" y="-2.600" width="5.500" height="5.200" rx="1" fill="#e4574c"/><rect x="5.500" y="-2.600" width="2.500" height="5.200" fill="#c4c8d0"/><rect x="8" y="-2.600" width="2.200" height="5.200" fill="#3cb46a"/><rect x="10.200" y="-2.600" width="2.500" height="5.200" fill="#d4d8de"/><path d="M12.700 -2.600h2.500l3.200 2.600l-3.200 2.600h-2.500z" fill="#f2c40c"/></g></svg>
<svg style="left:937px;top:655.8px;" width="28" height="22" viewBox="0 0 28 22"><path d="M.400 10.400l4.900-5.200l6.100 5.200l11-10.200l5.400 5l-16.400 16.600z" fill="url(#gChk)" stroke="#1f9418" stroke-width=".8" stroke-linejoin="round"/><path d="M1 10.400l4.300-4.600l6.100 5.200l11-10.200l4.600 4.400l-2.500 2.600c-6 3.800-14 6-21 5z" fill="#fff" opacity=".38"/></svg>
<svg style="left:1153px;top:652px;" width="26" height="29" viewBox="0 0 26 29"><path d="M3.500 6.600l18.500 17.400M22 6.600l-18.500 17.400" stroke="#cc3a1c" stroke-width="5.600" fill="none"/><path d="M3.500 5.400l18.500 17.400M22 5.400l-18.500 17.400" stroke="url(#gX2)" stroke-width="5.600" fill="none"/></svg>
</body></html>
